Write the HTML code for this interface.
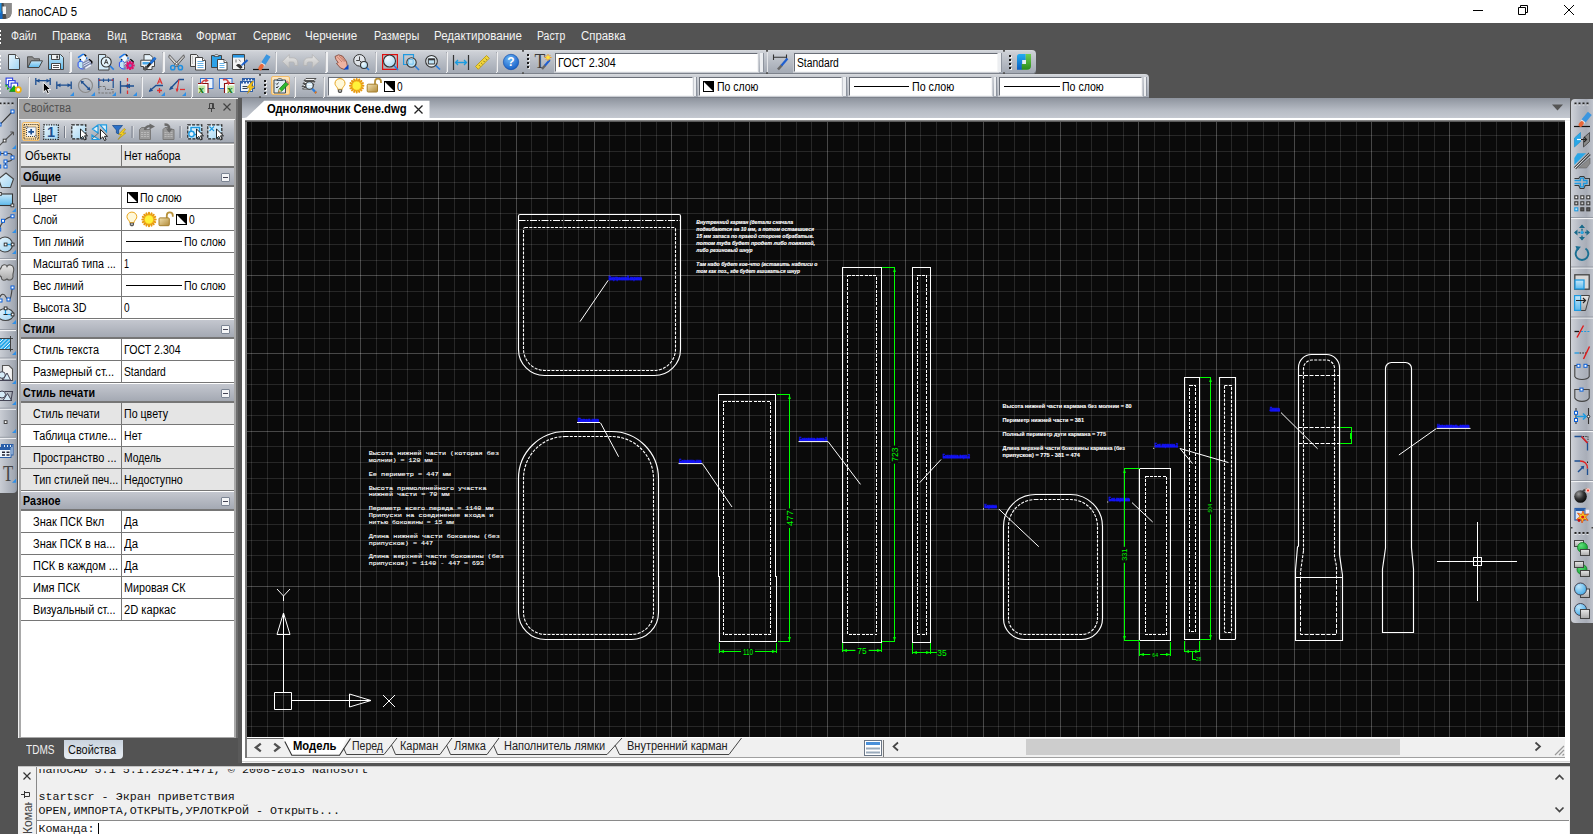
<!DOCTYPE html><html><head><meta charset="utf-8"><title>nanoCAD 5</title><style>
html,body{margin:0;padding:0;background:#535353;}
body{width:1593px;height:834px;position:relative;overflow:hidden;font-family:"Liberation Sans",sans-serif;font-size:12px;color:#000;}
.t{position:absolute;white-space:nowrap;line-height:14px;font-size:12px;}
.tb{position:absolute;background:linear-gradient(#d8dbdf 0%,#cdd0d6 8%,#b9bec6 45%,#a6acb6 88%,#a3a9b3 100%);box-shadow:0 -0.8px 0 #70767f inset;}
.cb{position:absolute;background:#fff;border:1px solid #f4f5f6;border-top-color:#6a6f78;border-left-color:#6a6f78;box-shadow:0 0 0 1px #c9ccd2;box-sizing:border-box;}
.sep{position:absolute;width:1.4px;background:#f0f1f3;box-shadow:-1px 0 0 rgba(60,66,80,0.28), -1px 1px 0 #f0f1f3;}
.grip{position:absolute;width:2px;}
.grip i{display:block;width:2px;height:2px;background:#1a1a1a;margin-bottom:2px;box-shadow:1px 1px 0 #f0f0f0;}
.sec{position:absolute;left:21px;width:213px;height:19px;background:linear-gradient(#c9ccd3,#a9aeb8);font-weight:bold;}
.sec .t{left:3px;top:3px;}
.row{position:absolute;left:21px;width:213px;height:21px;background:#fff;border-bottom:1px solid #7a7a7a;}
.row.g{background:#e6e6e6;}
.row .k{position:absolute;left:12px;top:4px;white-space:nowrap;line-height:14px;}
.row .v{position:absolute;left:102px;top:4px;white-space:nowrap;line-height:14px;}
.row .d{position:absolute;left:99px;top:0;width:1px;height:21px;background:#7a7a7a;}
.minus{position:absolute;width:7px;height:7px;border:1px solid #7c8594;background:#f4f5f7;border-radius:1px;}
.minus:after{content:"";position:absolute;left:1px;top:3px;width:5px;height:1px;background:#445;}
.sw{display:inline-block;width:10px;height:10px;border:1px solid #000;vertical-align:-2px;margin-right:3px;background:linear-gradient(to top right,#fff 0%,#fff 49%,#000 50%,#000 100%);}
.ln{display:inline-block;width:57px;height:1px;background:#000;vertical-align:4px;margin-right:3px;}
</style></head><body><div style="position:absolute;left:0px;top:0px;width:1593px;height:23px;background:#fff"></div><div class="t" style="left:17.5px;top:4.7px;font-size:12px;transform-origin:0 50%;transform:scaleX(0.9510);">nanoCAD 5</div><svg style="position:absolute;left:1460px;top:0" width="133" height="23" viewBox="1460 0 133 23"><path d="M1473 10.5h10 M1518.5 7.5h7v7h-7z M1520.5 7.5v-2h7v7h-2 M1564 5l10 10 M1574 5l-10 10" stroke="#000" stroke-width="1" fill="none"/></svg><div style="position:absolute;left:0px;top:23px;width:1593px;height:26px;background:#535353"></div><div class="t" style="left:11px;top:29px;font-size:12px;transform-origin:0 50%;transform:scaleX(0.8711);color:#f4f4f4;">Файл</div><div class="t" style="left:52.2px;top:29px;font-size:12px;transform-origin:0 50%;transform:scaleX(0.9547);color:#f4f4f4;">Правка</div><div class="t" style="left:106.5px;top:29px;font-size:12px;transform-origin:0 50%;transform:scaleX(0.8982);color:#f4f4f4;">Вид</div><div class="t" style="left:141px;top:29px;font-size:12px;transform-origin:0 50%;transform:scaleX(0.9147);color:#f4f4f4;">Вставка</div><div class="t" style="left:196.4px;top:29px;font-size:12px;transform-origin:0 50%;transform:scaleX(0.9524);color:#f4f4f4;">Формат</div><div class="t" style="left:252.6px;top:29px;font-size:12px;transform-origin:0 50%;transform:scaleX(0.9174);color:#f4f4f4;">Сервис</div><div class="t" style="left:305.3px;top:29px;font-size:12px;transform-origin:0 50%;transform:scaleX(0.9683);color:#f4f4f4;">Черчение</div><div class="t" style="left:373.6px;top:29px;font-size:12px;transform-origin:0 50%;transform:scaleX(0.9064);color:#f4f4f4;">Размеры</div><div class="t" style="left:434.4px;top:29px;font-size:12px;transform-origin:0 50%;transform:scaleX(0.9615);color:#f4f4f4;">Редактирование</div><div class="t" style="left:537.3px;top:29px;font-size:12px;transform-origin:0 50%;transform:scaleX(0.8690);color:#f4f4f4;">Растр</div><div class="t" style="left:581px;top:29px;font-size:12px;transform-origin:0 50%;transform:scaleX(0.9496);color:#f4f4f4;">Справка</div><div class="grip" style="left:0px;top:29.5px;width:1.3px;overflow:hidden"><i style="background:#fff;box-shadow:none;margin-bottom:2.1px"></i><i style="background:#fff;box-shadow:none;margin-bottom:2.1px"></i><i style="background:#fff;box-shadow:none;margin-bottom:2.1px"></i><i style="background:#fff;box-shadow:none;margin-bottom:2.1px"></i></div><div class="tb" style="left:0;top:49.5px;width:1004px;height:24px"></div><div class="tb" style="left:1003.5px;top:49.5px;width:32.5px;height:24px;border-radius:0 4px 4px 0"></div><div style="position:absolute;left:521.5999999999999px;top:49.5px;width:2.4px;height:2px;background:#555;border-radius:0 0 2px 2px"></div><div style="position:absolute;left:521.5999999999999px;top:71.5px;width:2.4px;height:2px;background:#555;border-radius:2px 2px 0 0"></div><div style="position:absolute;left:765.8px;top:49.5px;width:2.4px;height:2px;background:#555;border-radius:0 0 2px 2px"></div><div style="position:absolute;left:765.8px;top:71.5px;width:2.4px;height:2px;background:#555;border-radius:2px 2px 0 0"></div><div style="position:absolute;left:1002.5999999999999px;top:49.5px;width:2.4px;height:2px;background:#555;border-radius:0 0 2px 2px"></div><div style="position:absolute;left:1002.5999999999999px;top:71.5px;width:2.4px;height:2px;background:#555;border-radius:2px 2px 0 0"></div><div style="position:absolute;left:766.6px;top:51.5px;width:1.2px;height:20px;background:#e2e4e8"></div><div class="tb" style="left:0;top:74px;width:1149px;height:23.5px;border-radius:0 4px 0 0"></div><div class="sep" style="left:70.4px;top:52px;height:20px"></div><div class="sep" style="left:163.20000000000002px;top:52px;height:20px"></div><div class="sep" style="left:276.0px;top:52px;height:20px"></div><div class="sep" style="left:326.2px;top:52px;height:20px"></div><div class="sep" style="left:376.0px;top:52px;height:20px"></div><div class="sep" style="left:446.7px;top:52px;height:20px"></div><div class="sep" style="left:496.59999999999997px;top:52px;height:20px"></div><div class="grip" style="left:0px;top:55.2px;width:1.3px;overflow:hidden"><i style="background:#fff;box-shadow:none;margin-bottom:2.1px"></i><i style="background:#fff;box-shadow:none;margin-bottom:2.1px"></i><i style="background:#fff;box-shadow:none;margin-bottom:2.1px"></i><i style="background:#fff;box-shadow:none;margin-bottom:2.1px"></i></div><div class="grip" style="left:527.3px;top:54px"><i></i><i></i><i></i><i></i></div><div class="grip" style="left:1009px;top:54.5px"><i></i><i></i><i></i><i></i></div><div class="sep" style="left:28.9px;top:76.5px;height:20px"></div><div class="sep" style="left:141.70000000000002px;top:76.5px;height:20px"></div><div class="sep" style="left:191.5px;top:76.5px;height:20px"></div><div class="sep" style="left:294.7px;top:76.5px;height:20px"></div><div class="sep" style="left:323.79999999999995px;top:76.5px;height:20px"></div><div class="grip" style="left:0px;top:79.5px;width:1.3px;overflow:hidden"><i style="background:#fff;box-shadow:none;margin-bottom:2.1px"></i><i style="background:#fff;box-shadow:none;margin-bottom:2.1px"></i><i style="background:#fff;box-shadow:none;margin-bottom:2.1px"></i><i style="background:#fff;box-shadow:none;margin-bottom:2.1px"></i></div><div class="grip" style="left:264.3px;top:79.5px"><i></i><i></i><i></i><i></i></div><div style="position:absolute;left:258.8px;top:73.6px;width:2.4px;height:2px;background:#555;border-radius:0 0 2px 2px"></div><div style="position:absolute;left:258.8px;top:95.5px;width:2.4px;height:2px;background:#555;border-radius:2px 2px 0 0"></div><div style="position:absolute;left:271.2px;top:76.3px;width:18.6px;height:18.8px;background:linear-gradient(#fde9c6,#fbcf88 50%,#fde0aa);border:1px solid #f3bd6a;box-sizing:border-box;border-radius:2px"></div><div class="cb" style="left:555px;top:53px;width:203px;height:19px"></div><div class="t" style="left:557.8px;top:55.7px;font-size:12px;transform-origin:0 50%;transform:scaleX(0.9014);">ГОСТ 2.304</div><div class="cb" style="left:793.5px;top:53px;width:204px;height:19px"></div><div class="t" style="left:797.2px;top:55.7px;font-size:12px;transform-origin:0 50%;transform:scaleX(0.8582);">Standard</div><div class="cb" style="left:328px;top:77px;width:365px;height:19px"></div><div class="t" style="left:396.5px;top:79.7px;font-size:12px;transform-origin:0 50%;transform:scaleX(0.8391);">0</div><div class="cb" style="left:698.5px;top:77px;width:143px;height:19px"></div><svg style="position:absolute;left:703px;top:81px" width="11" height="11"><rect x="0.5" y="0.5" width="10" height="10" fill="#fff" stroke="#000"/><path d="M0.5 0.5H10.5V10.5Z" fill="#000"/></svg><div class="t" style="left:716.6px;top:79.7px;font-size:12px;transform-origin:0 50%;transform:scaleX(0.8726);">По слою</div><div class="cb" style="left:849px;top:77px;width:143px;height:19px"></div><div style="position:absolute;left:853.8px;top:86px;width:55.7px;height:1px;background:#000"></div><div class="t" style="left:912px;top:79.7px;font-size:12px;transform-origin:0 50%;transform:scaleX(0.8895);">По слою</div><div class="cb" style="left:999px;top:77px;width:143px;height:19px"></div><div style="position:absolute;left:1004px;top:86px;width:55.8px;height:1px;background:#000"></div><div class="t" style="left:1062.3px;top:79.7px;font-size:12px;transform-origin:0 50%;transform:scaleX(0.8810);">По слою</div><div style="position:absolute;left:760.4px;top:53px;width:2.4px;height:19px;background:#eceef1;box-shadow:1px 0 0 #8d939d"></div><div style="position:absolute;left:843.3px;top:77px;width:2.4px;height:19px;background:#eceef1;box-shadow:1px 0 0 #8d939d"></div><div style="position:absolute;left:993.6px;top:77px;width:2.4px;height:19px;background:#eceef1;box-shadow:1px 0 0 #8d939d"></div><div style="position:absolute;left:1144px;top:77px;width:2.4px;height:19px;background:#eceef1;box-shadow:1px 0 0 #8d939d"></div><div style="position:absolute;left:693.6px;top:77px;width:2.4px;height:19px;background:#eceef1;box-shadow:1px 0 0 #8d939d"></div><div style="position:absolute;left:998.3px;top:53px;width:2.4px;height:19px;background:#eceef1;box-shadow:1px 0 0 #8d939d"></div><div style="position:absolute;left:0;top:98px;width:17.2px;height:395px;background:linear-gradient(90deg,#c9cdd4,#b4b9c2 45%,#a2a8b2 85%,#8f959f);border-radius:0 0 4px 0"></div><div style="position:absolute;left:1570.7px;top:98.8px;width:22.3px;height:524px;background:linear-gradient(90deg,#cfd2d8,#b4b9c3 40%,#a9aeb8 70%,#bfc3cb);border-radius:4px 0 0 4px"></div><div style="position:absolute;left:18px;top:97.8px;width:219.5px;height:640px;background:#f2f2f2"></div><div style="position:absolute;left:19px;top:99px;width:218.5px;height:638.5px;background:#a9a9a9"></div><div style="position:absolute;left:19px;top:99px;width:218.5px;height:19.5px;background:#a0a0a0"></div><div style="position:absolute;left:19px;top:118.5px;width:216px;height:1.5px;background:#f4f4f4"></div><div style="position:absolute;left:235.5px;top:99px;width:2px;height:638.5px;background:#6e6e6e"></div><div class="t" style="left:22.5px;top:101px;font-size:12.5px;transform-origin:0 50%;transform:scaleX(0.8745);color:#505050;">Свойства</div><svg style="position:absolute;left:205px;top:100px" width="30" height="16" viewBox="205 100 30 16"><path d="M223.5 103.5l7 7 M230.5 103.5l-7 7" stroke="#444" stroke-width="1.2" fill="none"/><path d="M209.5 103.5v5 M213.5 103.5v5 M209.5 103.5h4 M212.5 103.5v5 M208 108.5h7 M211.5 108.5v3.5" stroke="#444" stroke-width="1" fill="none"/></svg><div class="tb" style="left:21px;top:120px;width:212.5px;height:23px"></div><div style="position:absolute;left:21.8px;top:122.2px;width:18.4px;height:18.6px;background:linear-gradient(#fde9c6,#fbcf88 50%,#fde0aa);border:1px solid #f3bd6a;box-sizing:border-box;border-radius:2px"></div><div style="position:absolute;left:21px;top:144px;width:212.5px;height:593px;background:#fff"></div><div style="position:absolute;left:21px;top:145px;width:212.5px;height:21px;background:#e5e5e5"></div><div style="position:absolute;left:21px;top:166px;width:212.5px;height:1px;background:#767676"></div><div style="position:absolute;left:121px;top:145px;width:1px;height:21px;background:#767676"></div><div class="t" style="left:24.5px;top:149px;font-size:12px;transform-origin:0 50%;transform:scaleX(0.9234);">Объекты</div><div class="t" style="left:124.4px;top:149px;font-size:12px;transform-origin:0 50%;transform:scaleX(0.8832);">Нет набора</div><div style="position:absolute;left:21px;top:166px;width:212.5px;height:1.5px;background:#767676"></div><div style="position:absolute;left:21px;top:167.5px;width:212.5px;height:17.5px;background:linear-gradient(#c4c7cf,#a4a9b3)"></div><div style="position:absolute;left:21px;top:185.0px;width:212.5px;height:1.5px;background:#767676"></div><div class="t" style="left:23.3px;top:170.0px;font-size:12px;transform-origin:0 50%;transform:scaleX(0.9262);font-weight:bold;">Общие</div><div class="minus" style="left:220.5px;top:172.5px"></div><div style="position:absolute;left:21px;top:187px;width:212.5px;height:21px;background:#fff"></div><div style="position:absolute;left:21px;top:208px;width:212.5px;height:1px;background:#767676"></div><div style="position:absolute;left:121px;top:187px;width:1px;height:21px;background:#767676"></div><div class="t" style="left:33.2px;top:191px;font-size:12px;transform-origin:0 50%;transform:scaleX(0.9000);">Цвет</div><svg style="position:absolute;left:127px;top:192.3px" width="11" height="11"><rect x="0.5" y="0.5" width="10" height="10" fill="#fff" stroke="#000"/><path d="M0.5 0.5H10.5V10.5Z" fill="#000"/></svg><div class="t" style="left:140.3px;top:191px;font-size:12px;transform-origin:0 50%;transform:scaleX(0.8789);">По слою</div><div style="position:absolute;left:21px;top:209px;width:212.5px;height:21px;background:#fff"></div><div style="position:absolute;left:21px;top:230px;width:212.5px;height:1px;background:#767676"></div><div style="position:absolute;left:121px;top:209px;width:1px;height:21px;background:#767676"></div><div class="t" style="left:33.2px;top:213px;font-size:12px;transform-origin:0 50%;transform:scaleX(0.8396);">Слой</div><span id="layerprops"></span><svg style="position:absolute;left:176px;top:214.3px" width="11" height="11"><rect x="0.5" y="0.5" width="10" height="10" fill="#fff" stroke="#000"/><path d="M0.5 0.5H10.5V10.5Z" fill="#000"/></svg><div class="t" style="left:189px;top:213px;font-size:12px;transform-origin:0 50%;transform:scaleX(0.8541);">0</div><div style="position:absolute;left:21px;top:231px;width:212.5px;height:21px;background:#fff"></div><div style="position:absolute;left:21px;top:252px;width:212.5px;height:1px;background:#767676"></div><div style="position:absolute;left:121px;top:231px;width:1px;height:21px;background:#767676"></div><div class="t" style="left:33.2px;top:235px;font-size:12px;transform-origin:0 50%;transform:scaleX(0.8953);">Тип линий</div><div style="position:absolute;left:126.2px;top:241px;width:55.5px;height:1px;background:#000"></div><div class="t" style="left:184.2px;top:235px;font-size:12px;transform-origin:0 50%;transform:scaleX(0.8789);">По слою</div><div style="position:absolute;left:21px;top:253px;width:212.5px;height:21px;background:#fff"></div><div style="position:absolute;left:21px;top:274px;width:212.5px;height:1px;background:#767676"></div><div style="position:absolute;left:121px;top:253px;width:1px;height:21px;background:#767676"></div><div class="t" style="left:33.2px;top:257px;font-size:12px;transform-origin:0 50%;transform:scaleX(0.8867);">Масштаб типа ...</div><div class="t" style="left:124.4px;top:257px;font-size:12px;transform-origin:0 50%;transform:scaleX(0.7492);">1</div><div style="position:absolute;left:21px;top:275px;width:212.5px;height:21px;background:#fff"></div><div style="position:absolute;left:21px;top:296px;width:212.5px;height:1px;background:#767676"></div><div style="position:absolute;left:121px;top:275px;width:1px;height:21px;background:#767676"></div><div class="t" style="left:33.2px;top:279px;font-size:12px;transform-origin:0 50%;transform:scaleX(0.8762);">Вес линий</div><div style="position:absolute;left:126.2px;top:285px;width:55.5px;height:1px;background:#000"></div><div class="t" style="left:184.2px;top:279px;font-size:12px;transform-origin:0 50%;transform:scaleX(0.8789);">По слою</div><div style="position:absolute;left:21px;top:297px;width:212.5px;height:21px;background:#fff"></div><div style="position:absolute;left:21px;top:318px;width:212.5px;height:1px;background:#767676"></div><div style="position:absolute;left:121px;top:297px;width:1px;height:21px;background:#767676"></div><div class="t" style="left:33.2px;top:301px;font-size:12px;transform-origin:0 50%;transform:scaleX(0.8917);">Высота 3D</div><div class="t" style="left:124.4px;top:301px;font-size:12px;transform-origin:0 50%;transform:scaleX(0.8391);">0</div><div style="position:absolute;left:21px;top:319.5px;width:212.5px;height:17.5px;background:linear-gradient(#c4c7cf,#a4a9b3)"></div><div style="position:absolute;left:21px;top:337.0px;width:212.5px;height:1.5px;background:#767676"></div><div class="t" style="left:23.3px;top:322.0px;font-size:12px;transform-origin:0 50%;transform:scaleX(0.8613);font-weight:bold;">Стили</div><div class="minus" style="left:220.5px;top:324.5px"></div><div style="position:absolute;left:21px;top:339px;width:212.5px;height:21px;background:#fff"></div><div style="position:absolute;left:21px;top:360px;width:212.5px;height:1px;background:#767676"></div><div style="position:absolute;left:121px;top:339px;width:1px;height:21px;background:#767676"></div><div class="t" style="left:33.2px;top:343px;font-size:12px;transform-origin:0 50%;transform:scaleX(0.9052);">Стиль текста</div><div class="t" style="left:124.4px;top:343px;font-size:12px;transform-origin:0 50%;transform:scaleX(0.8827);">ГОСТ 2.304</div><div style="position:absolute;left:21px;top:361px;width:212.5px;height:21px;background:#fff"></div><div style="position:absolute;left:21px;top:382px;width:212.5px;height:1px;background:#767676"></div><div style="position:absolute;left:121px;top:361px;width:1px;height:21px;background:#767676"></div><div class="t" style="left:33.2px;top:365px;font-size:12px;transform-origin:0 50%;transform:scaleX(0.9365);">Размерный ст...</div><div class="t" style="left:124.4px;top:365px;font-size:12px;transform-origin:0 50%;transform:scaleX(0.8582);">Standard</div><div style="position:absolute;left:21px;top:383.5px;width:212.5px;height:17.5px;background:linear-gradient(#c4c7cf,#a4a9b3)"></div><div style="position:absolute;left:21px;top:401.0px;width:212.5px;height:1.5px;background:#767676"></div><div class="t" style="left:23.3px;top:386.0px;font-size:12px;transform-origin:0 50%;transform:scaleX(0.8914);font-weight:bold;">Стиль печати</div><div class="minus" style="left:220.5px;top:388.5px"></div><div style="position:absolute;left:21px;top:403px;width:212.5px;height:21px;background:#e5e5e5"></div><div style="position:absolute;left:21px;top:424px;width:212.5px;height:1px;background:#767676"></div><div style="position:absolute;left:121px;top:403px;width:1px;height:21px;background:#767676"></div><div class="t" style="left:33.2px;top:407px;font-size:12px;transform-origin:0 50%;transform:scaleX(0.8896);">Стиль печати</div><div class="t" style="left:124.4px;top:407px;font-size:12px;transform-origin:0 50%;transform:scaleX(0.8862);">По цвету</div><div style="position:absolute;left:21px;top:425px;width:212.5px;height:21px;background:#fff"></div><div style="position:absolute;left:21px;top:446px;width:212.5px;height:1px;background:#767676"></div><div style="position:absolute;left:121px;top:425px;width:1px;height:21px;background:#767676"></div><div class="t" style="left:33.2px;top:429px;font-size:12px;transform-origin:0 50%;transform:scaleX(0.9050);">Таблица стиле...</div><div class="t" style="left:124.4px;top:429px;font-size:12px;transform-origin:0 50%;transform:scaleX(0.8807);">Нет</div><div style="position:absolute;left:21px;top:447px;width:212.5px;height:21px;background:#e5e5e5"></div><div style="position:absolute;left:21px;top:468px;width:212.5px;height:1px;background:#767676"></div><div style="position:absolute;left:121px;top:447px;width:1px;height:21px;background:#767676"></div><div class="t" style="left:33.2px;top:451px;font-size:12px;transform-origin:0 50%;transform:scaleX(0.9157);">Пространство ...</div><div class="t" style="left:124.4px;top:451px;font-size:12px;transform-origin:0 50%;transform:scaleX(0.8636);">Модель</div><div style="position:absolute;left:21px;top:469px;width:212.5px;height:21px;background:#e5e5e5"></div><div style="position:absolute;left:21px;top:490px;width:212.5px;height:1px;background:#767676"></div><div style="position:absolute;left:121px;top:469px;width:1px;height:21px;background:#767676"></div><div class="t" style="left:33.2px;top:473px;font-size:12px;transform-origin:0 50%;transform:scaleX(0.9037);">Тип стилей печ...</div><div class="t" style="left:124.4px;top:473px;font-size:12px;transform-origin:0 50%;transform:scaleX(0.8869);">Недоступно</div><div style="position:absolute;left:21px;top:491.5px;width:212.5px;height:17.5px;background:linear-gradient(#c4c7cf,#a4a9b3)"></div><div style="position:absolute;left:21px;top:509.0px;width:212.5px;height:1.5px;background:#767676"></div><div class="t" style="left:23.3px;top:494.0px;font-size:12px;transform-origin:0 50%;transform:scaleX(0.8953);font-weight:bold;">Разное</div><div class="minus" style="left:220.5px;top:496.5px"></div><div style="position:absolute;left:21px;top:511px;width:212.5px;height:21px;background:#fff"></div><div style="position:absolute;left:21px;top:532px;width:212.5px;height:1px;background:#767676"></div><div style="position:absolute;left:121px;top:511px;width:1px;height:21px;background:#767676"></div><div class="t" style="left:33.2px;top:515px;font-size:12px;transform-origin:0 50%;transform:scaleX(0.9243);">Знак ПСК Вкл</div><div class="t" style="left:124.4px;top:515px;font-size:12px;transform-origin:0 50%;transform:scaleX(0.9459);">Да</div><div style="position:absolute;left:21px;top:533px;width:212.5px;height:21px;background:#fff"></div><div style="position:absolute;left:21px;top:554px;width:212.5px;height:1px;background:#767676"></div><div style="position:absolute;left:121px;top:533px;width:1px;height:21px;background:#767676"></div><div class="t" style="left:33.2px;top:537px;font-size:12px;transform-origin:0 50%;transform:scaleX(0.9180);">Знак ПСК в на...</div><div class="t" style="left:124.4px;top:537px;font-size:12px;transform-origin:0 50%;transform:scaleX(0.9459);">Да</div><div style="position:absolute;left:21px;top:555px;width:212.5px;height:21px;background:#fff"></div><div style="position:absolute;left:21px;top:576px;width:212.5px;height:1px;background:#767676"></div><div style="position:absolute;left:121px;top:555px;width:1px;height:21px;background:#767676"></div><div class="t" style="left:33.2px;top:559px;font-size:12px;transform-origin:0 50%;transform:scaleX(0.9159);">ПСК в каждом ...</div><div class="t" style="left:124.4px;top:559px;font-size:12px;transform-origin:0 50%;transform:scaleX(0.9459);">Да</div><div style="position:absolute;left:21px;top:577px;width:212.5px;height:21px;background:#fff"></div><div style="position:absolute;left:21px;top:598px;width:212.5px;height:1px;background:#767676"></div><div style="position:absolute;left:121px;top:577px;width:1px;height:21px;background:#767676"></div><div class="t" style="left:33.2px;top:581px;font-size:12px;transform-origin:0 50%;transform:scaleX(0.9218);">Имя ПСК</div><div class="t" style="left:124.4px;top:581px;font-size:12px;transform-origin:0 50%;transform:scaleX(0.8985);">Мировая СК</div><div style="position:absolute;left:21px;top:599px;width:212.5px;height:21px;background:#fff"></div><div style="position:absolute;left:21px;top:620px;width:212.5px;height:1px;background:#767676"></div><div style="position:absolute;left:121px;top:599px;width:1px;height:21px;background:#767676"></div><div class="t" style="left:33.2px;top:603px;font-size:12px;transform-origin:0 50%;transform:scaleX(0.9023);">Визуальный ст...</div><div class="t" style="left:124.4px;top:603px;font-size:12px;transform-origin:0 50%;transform:scaleX(0.9296);">2D каркас</div><div class="t" style="left:26px;top:743px;font-size:12px;transform-origin:0 50%;transform:scaleX(0.8383);color:#f0f0f0;">TDMS</div><div style="position:absolute;left:64px;top:739.5px;width:59px;height:19.5px;background:linear-gradient(#c9d3de,#e9eef4);border-radius:0 0 4px 4px"></div><div class="t" style="left:68px;top:743px;font-size:12px;transform-origin:0 50%;transform:scaleX(0.9109);color:#111;">Свойства</div><div style="position:absolute;left:238px;top:98px;width:4px;height:665px;background:#5a5a5a"></div><div style="position:absolute;left:242px;top:98px;width:1328px;height:664.5px;background:#f0f0f0"></div><div style="position:absolute;left:242px;top:98px;width:1328px;height:20.5px;background:linear-gradient(#8e949e,#b7bcc5 60%,#c6cad2)"></div><svg style="position:absolute;left:242px;top:98px" width="200" height="21" viewBox="242 98 200 21"><path d="M244 119 V118 L246.5 117.6 L264.2 100.8 H429.5 V119 Z" fill="#fff"/></svg><div class="t" style="left:266.9px;top:102.4px;font-size:12px;transform-origin:0 50%;transform:scaleX(0.9373);font-weight:bold;">Однолямочник Сене.dwg</div><svg style="position:absolute;left:413px;top:104px" width="12" height="12"><path d="M1.5 1.5l8 8 M9.5 1.5l-8 8" stroke="#222" stroke-width="1.3" fill="none"/></svg><svg style="position:absolute;left:1552px;top:104px" width="12" height="8"><path d="M0 0.5h11l-5.5 6z" fill="#555"/></svg><div style="position:absolute;left:242px;top:118px;width:1328px;height:1.5px;background:#fff"></div><div style="position:absolute;left:245.3px;top:119.5px;width:1319.5px;height:618px;background:#6e6e6e"></div><div style="position:absolute;left:242px;top:119.5px;width:3px;height:643px;background:#fff"></div><div style="position:absolute;left:245.3px;top:119.5px;width:1.7px;height:638px;background:#7a7a7a"></div><div style="position:absolute;left:245.3px;top:119.5px;width:1319.5px;height:2.5px;background:linear-gradient(#9a9a9a,#444)"></div><div style="position:absolute;left:1565px;top:121px;width:4.5px;height:640px;background:#fff"></div><div style="position:absolute;left:247px;top:737px;width:1318px;height:20.5px;background:#f0f0f0"></div><div style="position:absolute;left:247px;top:736.7px;width:1318px;height:1.2px;background:#fff"></div><div style="position:absolute;left:247px;top:738px;width:38px;height:0.9px;background:#6a6a6a"></div><div style="position:absolute;left:247px;top:756.8px;width:1318px;height:0.9px;background:#a0a0a0"></div><div style="position:absolute;left:242px;top:757.5px;width:1328px;height:4.3px;background:linear-gradient(#fff,#fff 75%,#aaa)"></div><svg style="position:absolute;left:247px;top:737px" width="1318" height="22" viewBox="247 737 1318 22"><path d="M260.8 743.6l-5 3.9 5 3.9 M274.2 743.6l5 3.9-5 3.9" stroke="#505050" stroke-width="2.3" fill="none"/><path d="M283 737.5 L292 755 H339.5 L347 737.5 Z" fill="#fff"/><path d="M284.8 741.5 L291.8 755.2 H339.5 L350.5 738.5" stroke="#333" stroke-width="1.1" fill="none"/><path d="M343.5 748 L346.5 754.5 H384 L397 738 M391.5 745 L395.5 754.5 H440 L452 738 M446.5 745 L450.5 754.5 H487 L499 738 M493.5 745 L497.5 754.5 H607 L622 738 M615 745 L619.5 754.5 H729 L741.5 738" stroke="#444" stroke-width="1" fill="none"/><rect x="864.5" y="740.5" width="17" height="15" fill="#fff" stroke="#6a7686"/><rect x="866" y="742" width="14" height="3" fill="#4a90d9"/><path d="M866 748.5h14 M866 752.5h14" stroke="#9ab" stroke-width="2"/><path d="M883.5 740v17" stroke="#777"/><path d="M898 742.5l-4.5 4 4.5 4 M1535.5 742.5l4.5 4-4.5 4" stroke="#444" stroke-width="1.7" fill="none"/><rect x="1026" y="739" width="374" height="16" fill="#cdcdcd"/><path d="M1564 746l-9 9 M1564 750l-5 5 M1564 754l-1.5 1.5" stroke="#999" stroke-width="1.2"/></svg><div class="t" style="left:293.4px;top:738.6px;font-size:12px;transform-origin:0 50%;transform:scaleX(0.9363);font-weight:bold;">Модель</div><div class="t" style="left:352.1px;top:738.6px;font-size:12px;transform-origin:0 50%;transform:scaleX(0.8761);color:#222;">Перед</div><div class="t" style="left:400.3px;top:738.6px;font-size:12px;transform-origin:0 50%;transform:scaleX(0.9119);color:#222;">Карман</div><div class="t" style="left:453.7px;top:738.6px;font-size:12px;transform-origin:0 50%;transform:scaleX(0.9193);color:#222;">Лямка</div><div class="t" style="left:503.8px;top:738.6px;font-size:12px;transform-origin:0 50%;transform:scaleX(0.9158);color:#222;">Наполнитель лямки</div><div class="t" style="left:626.9px;top:738.6px;font-size:12px;transform-origin:0 50%;transform:scaleX(0.9164);color:#222;">Внутренний карман</div><svg id="cv" style="position:absolute;left:247px;top:122px" width="1318" height="615" viewBox="247 122 1318 615">
<rect x="247" y="122" width="1318" height="615" fill="#0a0a0a"/>
<g shape-rendering="crispEdges"><rect x="251" y="122" width="1" height="615" fill="#fff" opacity="0.12"/>
<rect x="267" y="122" width="1" height="615" fill="#fff" opacity="0.12"/>
<rect x="283" y="122" width="1" height="615" fill="#fff" opacity="0.25"/>
<rect x="298" y="122" width="1" height="615" fill="#fff" opacity="0.12"/>
<rect x="314" y="122" width="1" height="615" fill="#fff" opacity="0.12"/>
<rect x="329" y="122" width="1" height="615" fill="#fff" opacity="0.12"/>
<rect x="345" y="122" width="1" height="615" fill="#fff" opacity="0.12"/>
<rect x="360" y="122" width="1" height="615" fill="#fff" opacity="0.25"/>
<rect x="376" y="122" width="1" height="615" fill="#fff" opacity="0.12"/>
<rect x="391" y="122" width="1" height="615" fill="#fff" opacity="0.12"/>
<rect x="407" y="122" width="1" height="615" fill="#fff" opacity="0.12"/>
<rect x="423" y="122" width="1" height="615" fill="#fff" opacity="0.12"/>
<rect x="438" y="122" width="1" height="615" fill="#fff" opacity="0.25"/>
<rect x="454" y="122" width="1" height="615" fill="#fff" opacity="0.12"/>
<rect x="469" y="122" width="1" height="615" fill="#fff" opacity="0.12"/>
<rect x="485" y="122" width="1" height="615" fill="#fff" opacity="0.12"/>
<rect x="500" y="122" width="1" height="615" fill="#fff" opacity="0.12"/>
<rect x="516" y="122" width="1" height="615" fill="#fff" opacity="0.25"/>
<rect x="531" y="122" width="1" height="615" fill="#fff" opacity="0.12"/>
<rect x="547" y="122" width="1" height="615" fill="#fff" opacity="0.12"/>
<rect x="563" y="122" width="1" height="615" fill="#fff" opacity="0.12"/>
<rect x="578" y="122" width="1" height="615" fill="#fff" opacity="0.12"/>
<rect x="594" y="122" width="1" height="615" fill="#fff" opacity="0.25"/>
<rect x="609" y="122" width="1" height="615" fill="#fff" opacity="0.12"/>
<rect x="625" y="122" width="1" height="615" fill="#fff" opacity="0.12"/>
<rect x="640" y="122" width="1" height="615" fill="#fff" opacity="0.12"/>
<rect x="656" y="122" width="1" height="615" fill="#fff" opacity="0.12"/>
<rect x="671" y="122" width="1" height="615" fill="#fff" opacity="0.25"/>
<rect x="687" y="122" width="1" height="615" fill="#fff" opacity="0.12"/>
<rect x="703" y="122" width="1" height="615" fill="#fff" opacity="0.12"/>
<rect x="718" y="122" width="1" height="615" fill="#fff" opacity="0.12"/>
<rect x="734" y="122" width="1" height="615" fill="#fff" opacity="0.12"/>
<rect x="749" y="122" width="1" height="615" fill="#fff" opacity="0.25"/>
<rect x="765" y="122" width="1" height="615" fill="#fff" opacity="0.12"/>
<rect x="780" y="122" width="1" height="615" fill="#fff" opacity="0.12"/>
<rect x="796" y="122" width="1" height="615" fill="#fff" opacity="0.12"/>
<rect x="811" y="122" width="1" height="615" fill="#fff" opacity="0.12"/>
<rect x="827" y="122" width="1" height="615" fill="#fff" opacity="0.25"/>
<rect x="843" y="122" width="1" height="615" fill="#fff" opacity="0.12"/>
<rect x="858" y="122" width="1" height="615" fill="#fff" opacity="0.12"/>
<rect x="874" y="122" width="1" height="615" fill="#fff" opacity="0.12"/>
<rect x="889" y="122" width="1" height="615" fill="#fff" opacity="0.12"/>
<rect x="905" y="122" width="1" height="615" fill="#fff" opacity="0.25"/>
<rect x="920" y="122" width="1" height="615" fill="#fff" opacity="0.12"/>
<rect x="936" y="122" width="1" height="615" fill="#fff" opacity="0.12"/>
<rect x="951" y="122" width="1" height="615" fill="#fff" opacity="0.12"/>
<rect x="967" y="122" width="1" height="615" fill="#fff" opacity="0.12"/>
<rect x="983" y="122" width="1" height="615" fill="#fff" opacity="0.25"/>
<rect x="998" y="122" width="1" height="615" fill="#fff" opacity="0.12"/>
<rect x="1014" y="122" width="1" height="615" fill="#fff" opacity="0.12"/>
<rect x="1029" y="122" width="1" height="615" fill="#fff" opacity="0.12"/>
<rect x="1045" y="122" width="1" height="615" fill="#fff" opacity="0.12"/>
<rect x="1060" y="122" width="1" height="615" fill="#fff" opacity="0.25"/>
<rect x="1076" y="122" width="1" height="615" fill="#fff" opacity="0.12"/>
<rect x="1091" y="122" width="1" height="615" fill="#fff" opacity="0.12"/>
<rect x="1107" y="122" width="1" height="615" fill="#fff" opacity="0.12"/>
<rect x="1123" y="122" width="1" height="615" fill="#fff" opacity="0.12"/>
<rect x="1138" y="122" width="1" height="615" fill="#fff" opacity="0.25"/>
<rect x="1154" y="122" width="1" height="615" fill="#fff" opacity="0.12"/>
<rect x="1169" y="122" width="1" height="615" fill="#fff" opacity="0.12"/>
<rect x="1185" y="122" width="1" height="615" fill="#fff" opacity="0.12"/>
<rect x="1200" y="122" width="1" height="615" fill="#fff" opacity="0.12"/>
<rect x="1216" y="122" width="1" height="615" fill="#fff" opacity="0.25"/>
<rect x="1231" y="122" width="1" height="615" fill="#fff" opacity="0.12"/>
<rect x="1247" y="122" width="1" height="615" fill="#fff" opacity="0.12"/>
<rect x="1263" y="122" width="1" height="615" fill="#fff" opacity="0.12"/>
<rect x="1278" y="122" width="1" height="615" fill="#fff" opacity="0.12"/>
<rect x="1294" y="122" width="1" height="615" fill="#fff" opacity="0.25"/>
<rect x="1309" y="122" width="1" height="615" fill="#fff" opacity="0.12"/>
<rect x="1325" y="122" width="1" height="615" fill="#fff" opacity="0.12"/>
<rect x="1340" y="122" width="1" height="615" fill="#fff" opacity="0.12"/>
<rect x="1356" y="122" width="1" height="615" fill="#fff" opacity="0.12"/>
<rect x="1371" y="122" width="1" height="615" fill="#fff" opacity="0.25"/>
<rect x="1387" y="122" width="1" height="615" fill="#fff" opacity="0.12"/>
<rect x="1403" y="122" width="1" height="615" fill="#fff" opacity="0.12"/>
<rect x="1418" y="122" width="1" height="615" fill="#fff" opacity="0.12"/>
<rect x="1434" y="122" width="1" height="615" fill="#fff" opacity="0.12"/>
<rect x="1449" y="122" width="1" height="615" fill="#fff" opacity="0.25"/>
<rect x="1465" y="122" width="1" height="615" fill="#fff" opacity="0.12"/>
<rect x="1480" y="122" width="1" height="615" fill="#fff" opacity="0.12"/>
<rect x="1496" y="122" width="1" height="615" fill="#fff" opacity="0.12"/>
<rect x="1511" y="122" width="1" height="615" fill="#fff" opacity="0.12"/>
<rect x="1527" y="122" width="1" height="615" fill="#fff" opacity="0.25"/>
<rect x="1543" y="122" width="1" height="615" fill="#fff" opacity="0.12"/>
<rect x="1558" y="122" width="1" height="615" fill="#fff" opacity="0.12"/>
<rect x="247" y="135" width="1318" height="1" fill="#fff" opacity="0.12"/>
<rect x="247" y="151" width="1318" height="1" fill="#fff" opacity="0.12"/>
<rect x="247" y="166" width="1318" height="1" fill="#fff" opacity="0.12"/>
<rect x="247" y="182" width="1318" height="1" fill="#fff" opacity="0.12"/>
<rect x="247" y="198" width="1318" height="1" fill="#fff" opacity="0.25"/>
<rect x="247" y="213" width="1318" height="1" fill="#fff" opacity="0.12"/>
<rect x="247" y="229" width="1318" height="1" fill="#fff" opacity="0.12"/>
<rect x="247" y="244" width="1318" height="1" fill="#fff" opacity="0.12"/>
<rect x="247" y="260" width="1318" height="1" fill="#fff" opacity="0.12"/>
<rect x="247" y="275" width="1318" height="1" fill="#fff" opacity="0.25"/>
<rect x="247" y="291" width="1318" height="1" fill="#fff" opacity="0.12"/>
<rect x="247" y="306" width="1318" height="1" fill="#fff" opacity="0.12"/>
<rect x="247" y="322" width="1318" height="1" fill="#fff" opacity="0.12"/>
<rect x="247" y="338" width="1318" height="1" fill="#fff" opacity="0.12"/>
<rect x="247" y="353" width="1318" height="1" fill="#fff" opacity="0.25"/>
<rect x="247" y="369" width="1318" height="1" fill="#fff" opacity="0.12"/>
<rect x="247" y="384" width="1318" height="1" fill="#fff" opacity="0.12"/>
<rect x="247" y="400" width="1318" height="1" fill="#fff" opacity="0.12"/>
<rect x="247" y="415" width="1318" height="1" fill="#fff" opacity="0.12"/>
<rect x="247" y="431" width="1318" height="1" fill="#fff" opacity="0.25"/>
<rect x="247" y="446" width="1318" height="1" fill="#fff" opacity="0.12"/>
<rect x="247" y="462" width="1318" height="1" fill="#fff" opacity="0.12"/>
<rect x="247" y="478" width="1318" height="1" fill="#fff" opacity="0.12"/>
<rect x="247" y="493" width="1318" height="1" fill="#fff" opacity="0.12"/>
<rect x="247" y="509" width="1318" height="1" fill="#fff" opacity="0.25"/>
<rect x="247" y="524" width="1318" height="1" fill="#fff" opacity="0.12"/>
<rect x="247" y="540" width="1318" height="1" fill="#fff" opacity="0.12"/>
<rect x="247" y="555" width="1318" height="1" fill="#fff" opacity="0.12"/>
<rect x="247" y="571" width="1318" height="1" fill="#fff" opacity="0.12"/>
<rect x="247" y="586" width="1318" height="1" fill="#fff" opacity="0.25"/>
<rect x="247" y="602" width="1318" height="1" fill="#fff" opacity="0.12"/>
<rect x="247" y="618" width="1318" height="1" fill="#fff" opacity="0.12"/>
<rect x="247" y="633" width="1318" height="1" fill="#fff" opacity="0.12"/>
<rect x="247" y="649" width="1318" height="1" fill="#fff" opacity="0.12"/>
<rect x="247" y="664" width="1318" height="1" fill="#fff" opacity="0.25"/>
<rect x="247" y="680" width="1318" height="1" fill="#fff" opacity="0.12"/>
<rect x="247" y="695" width="1318" height="1" fill="#fff" opacity="0.12"/>
<rect x="247" y="711" width="1318" height="1" fill="#fff" opacity="0.12"/>
<rect x="247" y="726" width="1318" height="1" fill="#fff" opacity="0.12"/></g>
<path d="M520.0 214.5 H679.0 A1.5 1.5 0 0 1 680.5 216.0 V349.5 A26.0 26.0 0 0 1 654.5 375.5 H544.5 A26.0 26.0 0 0 1 518.5 349.5 V216.0 A1.5 1.5 0 0 1 520.0 214.5 Z" stroke="#fff" stroke-width="1.15" fill="none"/>
<line x1="518.5" y1="220.5" x2="680.5" y2="220.5" stroke="#fff" stroke-width="1" stroke-dasharray="7 1.5 1.5 1.5"/>
<path d="M525.0 227.5 H674.0 A1.5 1.5 0 0 1 675.5 229.0 V349.0 A21.5 21.5 0 0 1 654.0 370.5 H545.0 A21.5 21.5 0 0 1 523.5 349.0 V229.0 A1.5 1.5 0 0 1 525.0 227.5 Z" stroke="#fff" stroke-width="1.1" fill="none" stroke-dasharray="3 1.3"/>
<rect x="609.0" y="278.1" width="33.1" height="2.2" fill="#1414ff" opacity="0.8"/>
<text x="609.0" y="280.1" textLength="33.1" lengthAdjust="spacingAndGlyphs" font-family="Liberation Sans" font-weight="bold" font-size="5.2" fill="#1414ff" stroke="#1414ff" stroke-width="0.35">Внутренний карман</text>
<line x1="608.2" y1="280.3" x2="580.0" y2="321.6" stroke="#fff" stroke-width="1"/>
<path d="M565.5 431.5 H611.5 A47.0 47.0 0 0 1 658.5 478.5 V612.5 A27.0 27.0 0 0 1 631.5 639.5 H545.5 A27.0 27.0 0 0 1 518.5 612.5 V478.5 A47.0 47.0 0 0 1 565.5 431.5 Z" stroke="#fff" stroke-width="1.15" fill="none"/>
<path d="M565.5 436.5 H611.5 A42.0 42.0 0 0 1 653.5 478.5 V612.5 A22.0 22.0 0 0 1 631.5 634.5 H545.5 A22.0 22.0 0 0 1 523.5 612.5 V478.5 A42.0 42.0 0 0 1 565.5 436.5 Z" stroke="#fff" stroke-width="1.1" fill="none" stroke-dasharray="3 1.3"/>
<rect x="578.0" y="419.7" width="21.0" height="2.2" fill="#1414ff" opacity="0.8"/>
<text x="578.0" y="421.7" textLength="21.0" lengthAdjust="spacingAndGlyphs" font-family="Liberation Sans" font-weight="bold" font-size="5.2" fill="#1414ff" stroke="#1414ff" stroke-width="0.35">Перед низ</text>
<line x1="577.0" y1="422.5" x2="600.0" y2="422.5" stroke="#fff" stroke-width="1"/>
<line x1="600.5" y1="422.8" x2="618.6" y2="456.7" stroke="#fff" stroke-width="1"/>
<path d="M718.5 394.5 H775.5 V576.5 H776.5 V641.5 H719.5 V576.5 H718.5 Z" stroke="#fff" stroke-width="1.15" fill="none" shape-rendering="crispEdges"/>
<path d="M723.5 401.5 H770.5 V634.5 H723.5 Z" stroke="#fff" stroke-width="1.1" fill="none" stroke-dasharray="3 1.3" shape-rendering="crispEdges"/>
<rect x="679.5" y="460.8" width="22.0" height="2.2" fill="#1414ff" opacity="0.8"/>
<text x="679.5" y="462.8" textLength="22.0" lengthAdjust="spacingAndGlyphs" font-family="Liberation Sans" font-weight="bold" font-size="5.2" fill="#1414ff" stroke="#1414ff" stroke-width="0.35">Боковина низ</text>
<line x1="678.5" y1="463.6" x2="702.5" y2="463.6" stroke="#fff" stroke-width="1"/>
<line x1="702.5" y1="463.8" x2="732.0" y2="507.0" stroke="#fff" stroke-width="1"/>
<path d="M776.5 394.5 H789.5 V641.5 H777.5" stroke="#00ff00" stroke-width="1" fill="none" shape-rendering="crispEdges"/>
<path d="M789.5 394.5 L788.1 399.0 L790.9 399.0 Z" fill="#00ff00"/>
<path d="M789.5 641.5 L790.9 637.0 L788.1 637.0 Z" fill="#00ff00"/>
<path d="M719.5 643.0 V653.0 M776.5 643.0 V653.0 M719.5 651.5 H776.5" stroke="#00ff00" stroke-width="1" fill="none" shape-rendering="crispEdges"/>
<path d="M719.5 651.5 L724.0 652.9 L724.0 650.1 Z" fill="#00ff00"/>
<path d="M776.5 651.5 L772.0 650.1 L772.0 652.9 Z" fill="#00ff00"/>
<rect x="786.0" y="508.4" width="6.9" height="19.6" fill="#0a0a0a"/>
<text transform="translate(789.5 518.2) rotate(-90)" x="-7.8" y="3.0" textLength="15.6" lengthAdjust="spacingAndGlyphs" font-family="Liberation Sans" font-size="8.24" fill="#00ff00">477</text>
<rect x="741.0" y="648.4" width="14.0" height="6.9" fill="#0a0a0a"/>
<text transform="translate(748.0 651.9)" x="-5.0" y="3.0" textLength="10.0" lengthAdjust="spacingAndGlyphs" font-family="Liberation Sans" font-size="8.24" fill="#00ff00">110</text>
<path d="M842.5 267.5 H881.5 V642.5 H842.5 Z" stroke="#fff" stroke-width="1.15" fill="none" shape-rendering="crispEdges"/>
<path d="M847.5 275.5 H876.5 V634.5 H847.5 Z" stroke="#fff" stroke-width="1.1" fill="none" stroke-dasharray="3 1.3" shape-rendering="crispEdges"/>
<rect x="799.5" y="438.8" width="27.8" height="2.2" fill="#1414ff" opacity="0.8"/>
<text x="799.5" y="440.8" textLength="27.8" lengthAdjust="spacingAndGlyphs" font-family="Liberation Sans" font-weight="bold" font-size="5.2" fill="#1414ff" stroke="#1414ff" stroke-width="0.35">Боковина верх 1</text>
<line x1="798.5" y1="441.6" x2="828.3" y2="441.6" stroke="#fff" stroke-width="1"/>
<line x1="828.3" y1="441.8" x2="860.5" y2="484.4" stroke="#fff" stroke-width="1"/>
<path d="M881.5 267.5 H894.5 V641.5 H881.5" stroke="#00ff00" stroke-width="1" fill="none" shape-rendering="crispEdges"/>
<path d="M894.5 267.5 L893.1 272.0 L895.9 272.0 Z" fill="#00ff00"/>
<path d="M894.5 641.5 L895.9 637.0 L893.1 637.0 Z" fill="#00ff00"/>
<path d="M842.5 643.0 V652.0 M881.5 643.0 V652.0 M842.5 650.5 H881.5" stroke="#00ff00" stroke-width="1" fill="none" shape-rendering="crispEdges"/>
<path d="M842.5 650.5 L847.0 651.9 L847.0 649.1 Z" fill="#00ff00"/>
<path d="M881.5 650.5 L877.0 649.1 L877.0 651.9 Z" fill="#00ff00"/>
<rect x="891.0" y="445.5" width="6.9" height="18.2" fill="#0a0a0a"/>
<text transform="translate(894.5 454.6) rotate(-90)" x="-7.1" y="3.0" textLength="14.2" lengthAdjust="spacingAndGlyphs" font-family="Liberation Sans" font-size="8.24" fill="#00ff00">723</text>
<rect x="855.4" y="647.1" width="13.3" height="6.9" fill="#0a0a0a"/>
<text transform="translate(862.0 650.6)" x="-4.7" y="3.0" textLength="9.3" lengthAdjust="spacingAndGlyphs" font-family="Liberation Sans" font-size="8.24" fill="#00ff00">75</text>
<path d="M912.5 267.5 H930.5 V642.5 H912.5 Z" stroke="#fff" stroke-width="1.15" fill="none" shape-rendering="crispEdges"/>
<path d="M917.5 275.5 H926.5 V634.5 H917.5 Z" stroke="#fff" stroke-width="1.1" fill="none" stroke-dasharray="3 1.3" shape-rendering="crispEdges"/>
<rect x="943.0" y="456.3" width="27.0" height="2.2" fill="#1414ff" opacity="0.8"/>
<text x="943.0" y="458.3" textLength="27.0" lengthAdjust="spacingAndGlyphs" font-family="Liberation Sans" font-weight="bold" font-size="5.2" fill="#1414ff" stroke="#1414ff" stroke-width="0.35">Боковина верх 2</text>
<line x1="941.0" y1="459.5" x2="919.7" y2="482.7" stroke="#fff" stroke-width="1"/>
<path d="M912.5 643.0 V653.5 M930.5 643.0 V653.5 M912.5 652.5 H930.5" stroke="#00ff00" stroke-width="1" fill="none" shape-rendering="crispEdges"/>
<path d="M912.5 652.5 L917.0 653.9 L917.0 651.1 Z" fill="#00ff00"/>
<path d="M930.5 652.5 L926.0 651.1 L926.0 653.9 Z" fill="#00ff00"/>
<path d="M930.5 652.5 H936.5" stroke="#00ff00" stroke-width="1" fill="none" shape-rendering="crispEdges"/>
<text transform="translate(942.0 653.0)" x="-4.7" y="3.0" textLength="9.3" lengthAdjust="spacingAndGlyphs" font-family="Liberation Sans" font-size="8.24" fill="#00ff00">35</text>
<path d="M1035.5 494.5 H1070.5 A32.0 32.0 0 0 1 1102.5 526.5 V618.5 A21.0 21.0 0 0 1 1081.5 639.5 H1024.5 A21.0 21.0 0 0 1 1003.5 618.5 V526.5 A32.0 32.0 0 0 1 1035.5 494.5 Z" stroke="#fff" stroke-width="1.15" fill="none"/>
<path d="M1035.5 499.5 H1070.5 A27.0 27.0 0 0 1 1097.5 526.5 V618.5 A16.0 16.0 0 0 1 1081.5 634.5 H1024.5 A16.0 16.0 0 0 1 1008.5 618.5 V526.5 A27.0 27.0 0 0 1 1035.5 499.5 Z" stroke="#fff" stroke-width="1.1" fill="none" stroke-dasharray="3 1.3"/>
<rect x="984.8" y="506.0" width="12.3" height="2.2" fill="#1414ff" opacity="0.8"/>
<text x="984.8" y="508.0" textLength="12.3" lengthAdjust="spacingAndGlyphs" font-family="Liberation Sans" font-weight="bold" font-size="5.2" fill="#1414ff" stroke="#1414ff" stroke-width="0.35">Карман</text>
<rect x="983.0" y="508.4" width="1" height="1" fill="#fff"/>
<line x1="999.0" y1="509.2" x2="1038.8" y2="546.7" stroke="#fff" stroke-width="1"/>
<path d="M1139.5 468.5 H1170.5 V640.5 H1139.5 Z" stroke="#fff" stroke-width="1.15" fill="none" shape-rendering="crispEdges"/>
<path d="M1145.5 476.5 H1166.5 V634.5 H1145.5 Z" stroke="#fff" stroke-width="1.1" fill="none" stroke-dasharray="3 1.3" shape-rendering="crispEdges"/>
<rect x="1109.0" y="499.1" width="21.0" height="2.2" fill="#1414ff" opacity="0.8"/>
<text x="1109.0" y="501.1" textLength="21.0" lengthAdjust="spacingAndGlyphs" font-family="Liberation Sans" font-weight="bold" font-size="5.2" fill="#1414ff" stroke="#1414ff" stroke-width="0.35">Бок кармана</text>
<rect x="1107.2" y="501.5" width="1" height="1" fill="#fff"/>
<line x1="1132.0" y1="502.6" x2="1152.7" y2="522.0" stroke="#fff" stroke-width="1"/>
<path d="M1139.5 468.5 H1124.5 V640.5 H1139.5" stroke="#00ff00" stroke-width="1" fill="none" shape-rendering="crispEdges"/>
<path d="M1124.5 468.5 L1123.1 473.0 L1125.9 473.0 Z" fill="#00ff00"/>
<path d="M1124.5 640.5 L1125.9 636.0 L1123.1 636.0 Z" fill="#00ff00"/>
<path d="M1139.5 642.0 V656.0 M1170.5 642.0 V656.0 M1139.5 654.5 H1170.5" stroke="#00ff00" stroke-width="1" fill="none" shape-rendering="crispEdges"/>
<path d="M1139.5 654.5 L1144.0 655.9 L1144.0 653.1 Z" fill="#00ff00"/>
<path d="M1170.5 654.5 L1166.0 653.1 L1166.0 655.9 Z" fill="#00ff00"/>
<rect x="1121.5" y="546.8" width="6.0" height="16.0" fill="#0a0a0a"/>
<text transform="translate(1124.5 554.8) rotate(-90)" x="-6.0" y="2.5" textLength="12.0" lengthAdjust="spacingAndGlyphs" font-family="Liberation Sans" font-size="6.98" fill="#00ff00">331</text>
<rect x="1150.3" y="652.7" width="9.8" height="4.6" fill="#0a0a0a"/>
<text transform="translate(1155.2 655.0)" x="-2.9" y="1.8" textLength="5.8" lengthAdjust="spacingAndGlyphs" font-family="Liberation Sans" font-size="5.03" fill="#00ff00">64</text>
<path d="M1184.5 377.5 H1199.5 V639.5 H1184.5 Z" stroke="#fff" stroke-width="1.15" fill="none" shape-rendering="crispEdges"/>
<path d="M1189.5 385.5 H1195.5 V631.5 H1189.5 Z" stroke="#fff" stroke-width="1.1" fill="none" stroke-dasharray="3 1.3" shape-rendering="crispEdges"/>
<path d="M1199.5 377.5 H1210.5 V639.5 H1199.5" stroke="#00ff00" stroke-width="1" fill="none" shape-rendering="crispEdges"/>
<path d="M1210.5 377.5 L1209.1 382.0 L1211.9 382.0 Z" fill="#00ff00"/>
<path d="M1210.5 639.5 L1211.9 635.0 L1209.1 635.0 Z" fill="#00ff00"/>
<rect x="1208.2" y="501.9" width="4.6" height="12.6" fill="#0a0a0a"/>
<text transform="translate(1210.5 508.2) rotate(-90)" x="-4.3" y="1.8" textLength="8.6" lengthAdjust="spacingAndGlyphs" font-family="Liberation Sans" font-size="5.03" fill="#00ff00">504</text>
<path d="M1184.5 641.0 V652.0 M1199.5 641.0 V652.0 M1184.5 651.5 H1199.5" stroke="#00ff00" stroke-width="1" fill="none" shape-rendering="crispEdges"/>
<path d="M1184.5 651.5 L1189.0 652.9 L1189.0 650.1 Z" fill="#00ff00"/>
<path d="M1199.5 651.5 L1195.0 650.1 L1195.0 652.9 Z" fill="#00ff00"/>
<path d="M1192.5 651.5 V659.5 H1196" stroke="#00ff00" stroke-width="1" fill="none" shape-rendering="crispEdges"/>
<text transform="translate(1198.6 659.0)" x="-2.5" y="1.8" textLength="5.0" lengthAdjust="spacingAndGlyphs" font-family="Liberation Sans" font-size="5.03" fill="#00ff00">28</text>
<path d="M1219.5 377.5 H1235.5 V638.5 A1.0 1.0 0 0 1 1234.5 639.5 H1220.5 A1.0 1.0 0 0 1 1219.5 638.5 V377.5 Z" stroke="#fff" stroke-width="1.15" fill="none"/>
<path d="M1224.5 385.5 H1231.5 V631.0 A1.5 1.5 0 0 1 1230.0 632.5 H1226.0 A1.5 1.5 0 0 1 1224.5 631.0 V385.5 Z" stroke="#fff" stroke-width="1.1" fill="none" stroke-dasharray="3 1.3"/>
<rect x="1155.0" y="445.4" width="23.0" height="2.2" fill="#1414ff" opacity="0.8"/>
<text x="1155.0" y="447.4" textLength="23.0" lengthAdjust="spacingAndGlyphs" font-family="Liberation Sans" font-weight="bold" font-size="5.2" fill="#1414ff" stroke="#1414ff" stroke-width="0.35">Бок кармана 2</text>
<rect x="1153.2" y="447.8" width="1" height="1" fill="#fff"/>
<line x1="1180.0" y1="448.5" x2="1192.5" y2="463.6" stroke="#fff" stroke-width="1"/>
<line x1="1180.0" y1="448.5" x2="1228.5" y2="462.6" stroke="#fff" stroke-width="1"/>
<path d="M1311.5 354.5 H1326.5 A13 13 0 0 1 1339.5 367.5 V554.7 L1342.5 575.2 V640.5 H1295.5 V570 L1297.5 547 L1298.5 546 V367.5 A13 13 0 0 1 1311.5 354.5 Z" stroke="#fff" stroke-width="1.15" fill="none"/>
<line x1="1295.5" y1="577.5" x2="1342.5" y2="577.5" stroke="#fff" stroke-width="1.15" fill="none"/>
<path d="M1303.5 550.8 V368.5 A8.5 8.5 0 0 1 1312 360 H1326 A8.5 8.5 0 0 1 1334.5 368.5 V556.6 L1336.5 566.2 V577.5" stroke="#fff" stroke-width="1.1" fill="none" stroke-dasharray="3 1.3"/>
<path d="M1303.5 550.8 L1300.5 572 V577.5" stroke="#fff" stroke-width="1.1" fill="none" stroke-dasharray="3 1.3"/>
<path d="M1300.5 577.5 H1336.5 V634.5 H1300.5 Z" stroke="#fff" stroke-width="1" fill="none" stroke-dasharray="4 1.5"/>
<line x1="1298.5" y1="375.5" x2="1339.5" y2="375.5" stroke="#fff" stroke-width="1" stroke-dasharray="4 1.5"/>
<line x1="1298.5" y1="427.5" x2="1339.5" y2="427.5" stroke="#fff" stroke-width="1" stroke-dasharray="4 1.5"/>
<line x1="1298.5" y1="443.5" x2="1339.5" y2="443.5" stroke="#fff" stroke-width="1" stroke-dasharray="4 1.5"/>
<path d="M1339.5 427.5 H1351.5 V443.5 H1339.5 M1351.5 433.5 H1350.5 V438.5 H1351.5" stroke="#00ff00" stroke-width="1" fill="none" shape-rendering="crispEdges"/>
<rect x="1270.0" y="409.4" width="10.0" height="2.2" fill="#1414ff" opacity="0.8"/>
<text x="1270.0" y="411.4" textLength="10.0" lengthAdjust="spacingAndGlyphs" font-family="Liberation Sans" font-weight="bold" font-size="5.2" fill="#1414ff" stroke="#1414ff" stroke-width="0.35">Лямка</text>
<line x1="1281.0" y1="412.6" x2="1317.6" y2="448.8" stroke="#fff" stroke-width="1"/>
<path d="M1391.5 362.5 H1405.5 A6 6 0 0 1 1411.5 368.5 V548 L1413.5 569 V632.5 H1382.5 V569 L1385.5 548 V368.5 A6 6 0 0 1 1391.5 362.5 Z" stroke="#fff" stroke-width="1.15" fill="none"/>
<rect x="1437.5" y="425.6" width="32.0" height="2.2" fill="#1414ff" opacity="0.8"/>
<text x="1437.5" y="427.6" textLength="32.0" lengthAdjust="spacingAndGlyphs" font-family="Liberation Sans" font-weight="bold" font-size="5.2" fill="#1414ff" stroke="#1414ff" stroke-width="0.35">Наполнитель лямки</text>
<line x1="1436.5" y1="428.4" x2="1470.5" y2="428.4" stroke="#fff" stroke-width="1"/>
<line x1="1436.0" y1="428.8" x2="1398.9" y2="455.0" stroke="#fff" stroke-width="1"/>
<path d="M1437 561.5 H1517 M1477.5 522 V601 M1473.5 557.5 H1481.5 V565.5 H1473.5 Z" stroke="#fff" stroke-width="1" fill="none" shape-rendering="crispEdges"/>
<path d="M274.5 692.5 H291.5 V709.5 H274.5 Z M283.5 692 V613 M283.5 613 L277 634.5 H290 Z M292 700.5 H371 M371 700.5 L349.5 694 V707 Z M277 589 L283.5 596 L290 589 M283.5 596 V601 M383 695 L395 707 M395 695 L383 707" stroke="#fff" stroke-width="1" fill="none"/>
<text x="368.7" y="455.0" textLength="130.3" lengthAdjust="spacingAndGlyphs" font-family="Liberation Mono" font-size="6.1" fill="#fff" stroke="#fff" stroke-width="0.12">Высота нижней части (которая без</text>
<text x="368.7" y="461.8" textLength="63.8" lengthAdjust="spacingAndGlyphs" font-family="Liberation Mono" font-size="6.1" fill="#fff" stroke="#fff" stroke-width="0.12">молнии) = 120 мм</text>
<text x="368.7" y="475.9" textLength="82.3" lengthAdjust="spacingAndGlyphs" font-family="Liberation Mono" font-size="6.1" fill="#fff" stroke="#fff" stroke-width="0.12">Ее периметр = 447 мм</text>
<text x="368.7" y="489.6" textLength="117.8" lengthAdjust="spacingAndGlyphs" font-family="Liberation Mono" font-size="6.1" fill="#fff" stroke="#fff" stroke-width="0.12">Высота прямолинейного участка</text>
<text x="368.7" y="496.4" textLength="80.8" lengthAdjust="spacingAndGlyphs" font-family="Liberation Mono" font-size="6.1" fill="#fff" stroke="#fff" stroke-width="0.12">нижней части = 70 мм</text>
<text x="368.7" y="510.4" textLength="124.8" lengthAdjust="spacingAndGlyphs" font-family="Liberation Mono" font-size="6.1" fill="#fff" stroke="#fff" stroke-width="0.12">Периметр всего переда = 1140 мм</text>
<text x="368.7" y="517.3" textLength="124.8" lengthAdjust="spacingAndGlyphs" font-family="Liberation Mono" font-size="6.1" fill="#fff" stroke="#fff" stroke-width="0.12">Припуски на соединение входа и</text>
<text x="368.7" y="524.2" textLength="85.3" lengthAdjust="spacingAndGlyphs" font-family="Liberation Mono" font-size="6.1" fill="#fff" stroke="#fff" stroke-width="0.12">нитью боковины = 15 мм</text>
<text x="368.7" y="537.9" textLength="131.3" lengthAdjust="spacingAndGlyphs" font-family="Liberation Mono" font-size="6.1" fill="#fff" stroke="#fff" stroke-width="0.12">Длина нижней части боковины (без</text>
<text x="368.7" y="544.7" textLength="64.3" lengthAdjust="spacingAndGlyphs" font-family="Liberation Mono" font-size="6.1" fill="#fff" stroke="#fff" stroke-width="0.12">припусков) = 447</text>
<text x="368.7" y="558.4" textLength="135.3" lengthAdjust="spacingAndGlyphs" font-family="Liberation Mono" font-size="6.1" fill="#fff" stroke="#fff" stroke-width="0.12">Длина верхней части боковины (без</text>
<text x="368.7" y="565.3" textLength="115.3" lengthAdjust="spacingAndGlyphs" font-family="Liberation Mono" font-size="6.1" fill="#fff" stroke="#fff" stroke-width="0.12">припусков) = 1140 - 447 = 693</text>
<text x="696.3" y="224.0" textLength="96.7" lengthAdjust="spacingAndGlyphs" font-family="Liberation Sans" font-size="5.9" fill="#fff" font-style="italic" font-weight="bold" stroke="#fff" stroke-width="0.15">Внутренний карман (детали сначала</text>
<text x="696.3" y="230.9" textLength="117.7" lengthAdjust="spacingAndGlyphs" font-family="Liberation Sans" font-size="5.9" fill="#fff" font-style="italic" font-weight="bold" stroke="#fff" stroke-width="0.15">подгибаются на 10 мм, а потом оставшиеся</text>
<text x="696.3" y="238.0" textLength="117.7" lengthAdjust="spacingAndGlyphs" font-family="Liberation Sans" font-size="5.9" fill="#fff" font-style="italic" font-weight="bold" stroke="#fff" stroke-width="0.15">15 мм запаса по правой стороне обрабатыв.</text>
<text x="696.3" y="245.0" textLength="118.7" lengthAdjust="spacingAndGlyphs" font-family="Liberation Sans" font-size="5.9" fill="#fff" font-style="italic" font-weight="bold" stroke="#fff" stroke-width="0.15">потом туда будет продет либо повязкой,</text>
<text x="696.3" y="252.0" textLength="56.2" lengthAdjust="spacingAndGlyphs" font-family="Liberation Sans" font-size="5.9" fill="#fff" font-style="italic" font-weight="bold" stroke="#fff" stroke-width="0.15">либо резиновый шнур</text>
<text x="696.3" y="265.6" textLength="121.2" lengthAdjust="spacingAndGlyphs" font-family="Liberation Sans" font-size="5.9" fill="#fff" font-style="italic" font-weight="bold" stroke="#fff" stroke-width="0.15">Там надо будет кое-что (вставить надписи о</text>
<text x="696.3" y="272.7" textLength="103.7" lengthAdjust="spacingAndGlyphs" font-family="Liberation Sans" font-size="5.9" fill="#fff" font-style="italic" font-weight="bold" stroke="#fff" stroke-width="0.15">том как поз., где будет вшиваться шнур</text>
<text x="1002.5" y="408.4" textLength="129.1" lengthAdjust="spacingAndGlyphs" font-family="Liberation Sans" font-size="5.6" fill="#fff" font-weight="bold" stroke="#fff" stroke-width="0.1">Высота нижней части кармана без молнии = 80</text>
<text x="1002.5" y="422.3" textLength="81.5" lengthAdjust="spacingAndGlyphs" font-family="Liberation Sans" font-size="5.6" fill="#fff" font-weight="bold" stroke="#fff" stroke-width="0.1">Периметр нижней части = 381</text>
<text x="1002.5" y="436.1" textLength="103.5" lengthAdjust="spacingAndGlyphs" font-family="Liberation Sans" font-size="5.6" fill="#fff" font-weight="bold" stroke="#fff" stroke-width="0.1">Полный периметр дуги кармана = 775</text>
<text x="1002.5" y="450.4" textLength="122.5" lengthAdjust="spacingAndGlyphs" font-family="Liberation Sans" font-size="5.6" fill="#fff" font-weight="bold" stroke="#fff" stroke-width="0.1">Длина верхней части боковины кармана (без</text>
<text x="1002.5" y="457.3" textLength="77.5" lengthAdjust="spacingAndGlyphs" font-family="Liberation Sans" font-size="5.6" fill="#fff" font-weight="bold" stroke="#fff" stroke-width="0.1">припусков) = 775 - 381 = 474</text>
</svg><div style="position:absolute;left:18px;top:767px;width:1551.5px;height:67px;background:#f0f0f0"></div><div style="position:absolute;left:18px;top:767px;width:19px;height:67px;background:#f0f0f0;border-right:1px solid #888;box-sizing:border-box"></div><div style="position:absolute;left:18px;top:766.2px;width:1551.5px;height:1.3px;background:#c4c4c4"></div><div style="position:absolute;left:37px;top:819.5px;width:1532px;height:1px;background:#8a8a8a"></div><div style="position:absolute;left:37px;top:820.5px;width:1532px;height:14px;background:#fff"></div><div style="position:absolute;left:37px;top:768.5px;width:1510px;height:51px;overflow:hidden"><div class="t" style="left:1.5px;top:-5.4px;font-family:'Liberation Mono',monospace;font-size:11.7px;line-height:14px;color:#111">nanoCAD 5.1 5.1.2524.1471, © 2008-2013 Nanosoft</div><div class="t" style="left:1.5px;top:21.6px;font-family:'Liberation Mono',monospace;font-size:11.7px;line-height:14px;color:#111">startscr - Экран приветствия</div><div class="t" style="left:1.5px;top:35.1px;font-family:'Liberation Mono',monospace;font-size:11.7px;line-height:14px;color:#111">OPEN,ИМПОРТА,ОТКРЫТЬ,УРЛОТКРОЙ - Открыть...</div></div><div class="t" style="left:38.5px;top:821.5px;font-family:'Liberation Mono',monospace;font-size:11.7px;line-height:14px;color:#111">Команда:</div><div style="position:absolute;left:97.5px;top:822.5px;width:1px;height:12px;background:#000"></div><svg style="position:absolute;left:18px;top:767px" width="19" height="67" viewBox="18 767 19 67"><path d="M23.5 772.5l7 7 M30.5 772.5l-7 7" stroke="#333" stroke-width="1.2" fill="none"/><path d="M29.5 792.5h-5 M29.5 796.5h-5 M29.5 792.5v4 M24.5 791v7 M24.5 794.5h-3.5" stroke="#333" stroke-width="1" fill="none"/></svg><div class="t" style="left:21px;top:834px;transform-origin:0 0;transform:rotate(-90deg);color:#444;font-size:12px;width:32px;overflow:hidden">Команд</div><div style="position:absolute;left:1550px;top:768.5px;width:18px;height:51px;background:#f0f0f0"></div><svg style="position:absolute;left:1550px;top:768px" width="18" height="52" viewBox="1550 768 18 52"><path d="M1555.5 779.5l4-4 4 4 M1555.5 807.5l4 4 4-4" stroke="#444" stroke-width="1.7" fill="none"/></svg><svg style="position:absolute;left:0;top:0;pointer-events:none" width="1593" height="834" viewBox="0 0 1593 834"><defs>
<linearGradient id="gb" x1="0" y1="0" x2="1" y2="1"><stop offset="0" stop-color="#eaf6fd"/><stop offset="1" stop-color="#9fd4f2"/></linearGradient>
<linearGradient id="gb2" x1="0" y1="0" x2="0" y2="1"><stop offset="0" stop-color="#c9e9fa"/><stop offset="1" stop-color="#5db9ec"/></linearGradient>
<linearGradient id="gg" x1="0" y1="0" x2="0" y2="1"><stop offset="0" stop-color="#e8e8e8"/><stop offset="1" stop-color="#a8a8a8"/></linearGradient>
<linearGradient id="gg2" x1="0" y1="0" x2="0" y2="1"><stop offset="0" stop-color="#e6e6e6"/><stop offset="1" stop-color="#c2c2c2"/></linearGradient>
<linearGradient id="gnb" x1="0" y1="0" x2="0" y2="1"><stop offset="0" stop-color="#22aef2"/><stop offset="1" stop-color="#0a5cc0"/></linearGradient><linearGradient id="gng" x1="0" y1="0" x2="0" y2="1"><stop offset="0" stop-color="#72cf52"/><stop offset="1" stop-color="#2a8c1a"/></linearGradient>
<radialGradient id="glens" cx="0.35" cy="0.3" r="0.8"><stop offset="0" stop-color="#f4fbff"/><stop offset="1" stop-color="#a5d8f3"/></radialGradient>
<radialGradient id="ghelp" cx="0.4" cy="0.3" r="0.8"><stop offset="0" stop-color="#6db5f5"/><stop offset="1" stop-color="#0d56c2"/></radialGradient>
<radialGradient id="gbomb" cx="0.35" cy="0.3" r="0.8"><stop offset="0" stop-color="#999"/><stop offset="0.5" stop-color="#333"/><stop offset="1" stop-color="#000"/></radialGradient>
<radialGradient id="ggreen" cx="0.35" cy="0.3" r="0.8"><stop offset="0" stop-color="#5fe07a"/><stop offset="1" stop-color="#0a9a2a"/></radialGradient>
<radialGradient id="gblue" cx="0.35" cy="0.3" r="0.8"><stop offset="0" stop-color="#bfe6fb"/><stop offset="1" stop-color="#3aa6e6"/></radialGradient>
<linearGradient id="ggold" x1="0" y1="0" x2="1" y2="1"><stop offset="0" stop-color="#f3e2b0"/><stop offset="1" stop-color="#b08a3a"/></linearGradient>
<g id="tri"><path d="M4 0V4H0Z" fill="#2f8fe8"/></g>
<g id="cur"><path d="M0 0V9.5L2.3 7.4L4 11L5.6 10.3L4 6.8H7Z" fill="#fff" stroke="#111" stroke-width="0.9"/></g>
<g id="curb"><path d="M0 0V10L2.4 7.8L4.2 11.6L6 10.8L4.3 7.2H7.5Z" fill="#000" stroke="#fff" stroke-width="0.9"/></g>
<g id="hb"><rect x="-1.5" y="-1.5" width="3" height="3" fill="#fff" stroke="#0a5fd8" stroke-width="1"/></g>
<g id="bulb"><path d="M6 0.6C2.8 0.6 1 3 1 5.3C1 7.3 2.3 8.2 3.2 9.6C3.6 10.3 3.7 10.8 3.7 11.3H8.3C8.3 10.8 8.4 10.3 8.8 9.6C9.7 8.2 11 7.3 11 5.3C11 3 9.2 0.6 6 0.6Z" fill="#fff8d8" stroke="#e8a41c" stroke-width="1"/><path d="M3.8 11.5H8.2V13.2C8.2 14.3 7.2 15 6 15C4.8 15 3.8 14.3 3.8 13.2Z" fill="#555"/><rect x="5" y="12.3" width="2" height="1.2" fill="#ddd"/></g>
<g id="sun"><g stroke="#e89a10" stroke-width="2" stroke-linecap="round"><path d="M7.7 1V14.4 M1 7.7H14.4 M3 3L12.4 12.4 M12.4 3L3 12.4 M5.1 1.5L10.3 13.9 M10.3 1.5L5.1 13.9 M1.5 5.1L13.9 10.3 M1.5 10.3L13.9 5.1"/></g><circle cx="7.7" cy="7.7" r="4.6" fill="#fff23a" stroke="#f0b21a" stroke-width="0.8"/></g>
<g id="lock"><path d="M8.5 7V4.2C8.5 2.4 9.8 1.2 11.5 1.2C13.2 1.2 14.5 2.4 14.5 4.2V5.5" fill="none" stroke="#b8923a" stroke-width="1.8"/><rect x="0.7" y="6.7" width="10.3" height="7.8" rx="1" fill="url(#ggold)" stroke="#a67f2c" stroke-width="1"/></g>
<g id="sw"><rect x="0.5" y="0.5" width="10" height="10" fill="#fff" stroke="#000"/><path d="M0.5 0.5H10.5V10.5Z" fill="#000"/></g>
</defs><g transform="translate(8 54)"><path d="M0.5 0.5H7.5 L11.5 4.5 V15.5 H0.5Z" fill="url(#gb)" stroke="#444"/><path d="M7.5 0.5V4.5H11.5" fill="#fff" stroke="#444" stroke-width="0.9"/></g><g transform="translate(27 56)"><path d="M0.5 11.5V0.8H5.5L7 2.8H12.5V5" fill="#8c8c8c" stroke="#555"/><path d="M0.8 11.5L4.2 4.8H15.5L12 11.5Z" fill="url(#gb2)" stroke="#444"/></g><g transform="translate(48 54)"><path d="M0.5 0.5H12.5L15.5 3.5V15.5H0.5Z" fill="url(#gb2)" stroke="#444"/><path d="M3.5 0.5H11.5V5.5H3.5Z" fill="#f2f2f2" stroke="#444"/><rect x="8.3" y="1.6" width="1.8" height="2.8" fill="#444"/><path d="M3.5 9.5H12.5V15.5H3.5Z" fill="#fff" stroke="#444"/><path d="M5 11.5H11 M5 13.5H11" stroke="#555"/></g><g transform="translate(77.5 54)"><path d="M0.6 8.4L3.5 6.8L6 8.7V15L3.1 14.7L0.6 12.7Z" fill="#bfe6f6" stroke="#2a4cf0" stroke-width="1"/><path d="M4.8 8.7L11.5 5.2L14.3 7.5V10.5L7 15.7L4.8 14Z" fill="#7c88ad"/><path d="M5.3 10.3L12.3 6.6 M6 12.2L13.2 8.3" stroke="#dfe5f4" stroke-width="1"/><path d="M7.8 14.3L13.3 11" stroke="#eef1fa" stroke-width="1.5"/><path d="M11.5 5.2L14.3 7.5V9.6" fill="none" stroke="#000" stroke-width="1.3"/><path d="M2.8 3.4L6.3 1.2L8.8 4L6 8L3.1 5.8Z" fill="#f2f9ff"/><path d="M0.5 3.6L5.1 0.4H6.9" fill="none" stroke="#1a7af0" stroke-width="1.4"/><path d="M9.2 3.3V5.2 M2.6 5L2.6 8" stroke="#1a7af0" stroke-width="1.2"/><path d="M6.9 0.4L8.7 2.3" stroke="#000" stroke-width="1.3"/><circle cx="3" cy="5.6" r="0.7" fill="#000"/></g><g transform="translate(98 54)"><path d="M0.5 0.5H7.5 L11.0 4.0 V16.0 H0.5Z" fill="#d3ebf9" stroke="#444"/><path d="M7.5 0.5V4.0H11.0" fill="#fff" stroke="#444" stroke-width="0.9"/><path d="M11.7 11.5L15.8 15.6" stroke="#2a7fe0" stroke-width="1.6"/><circle cx="8.2" cy="8" r="5" fill="#e4f4fc" stroke="#333" stroke-width="1.1"/><path d="M6.3 10.2L8.2 5.4L10.1 10.2 M7 8.6H9.4" stroke="#333" stroke-width="0.9" fill="none"/></g><g transform="translate(118.8 54)"><path d="M0.6 8.4L3.5 6.8L6 8.7V15L3.1 14.7L0.6 12.7Z" fill="#bfe6f6" stroke="#2a4cf0" stroke-width="1"/><path d="M4.8 8.7L11.5 5.2L14.3 7.5V10.5L7 15.7L4.8 14Z" fill="#7c88ad"/><path d="M5.3 10.3L12.3 6.6 M6 12.2L13.2 8.3" stroke="#dfe5f4" stroke-width="1"/><path d="M7.8 14.3L13.3 11" stroke="#eef1fa" stroke-width="1.5"/><path d="M11.5 5.2L14.3 7.5V9.6" fill="none" stroke="#000" stroke-width="1.3"/><path d="M2.8 3.4L6.3 1.2L8.8 4L6 8L3.1 5.8Z" fill="#f2f9ff"/><path d="M0.5 3.6L5.1 0.4H6.9" fill="none" stroke="#1a7af0" stroke-width="1.4"/><path d="M9.2 3.3V5.2 M2.6 5L2.6 8" stroke="#1a7af0" stroke-width="1.2"/><path d="M6.9 0.4L8.7 2.3" stroke="#000" stroke-width="1.3"/><circle cx="3" cy="5.6" r="0.7" fill="#000"/><g transform="translate(11.3 11.5)"><g stroke="#e0126e" stroke-width="2.2"><path d="M0 -4.6V4.6 M-4.6 0H4.6 M-3.3 -3.3L3.3 3.3 M3.3 -3.3L-3.3 3.3"/></g><circle r="3.1" fill="#e0126e"/><circle r="1.5" fill="#7080b8"/></g></g><g transform="translate(140 54)"><path d="M4 6V0.6H10L12.8 3.4V6" fill="#e6f3fb" stroke="#444"/><path d="M0.8 6.2H14.5V12.5H12V15.5H3.5V12.5H0.8Z" fill="#f4f4f4" stroke="#444"/><rect x="2.5" y="8" width="7" height="2.5" fill="#4aa8e8"/><path d="M5 15.5L14.8 4.5" stroke="#222" stroke-width="2.6"/><path d="M10.5 9.3L15.5 3.6" stroke="#1f6fd6" stroke-width="2.6"/><path d="M4 16L7 12.5" stroke="#555" stroke-width="3"/></g><g transform="translate(168.5 54.5)"><path d="M1 0.3L10.8 11L8.6 12.2L0.2 2.6Z" fill="#d4d4d4" stroke="#444" stroke-width="0.8"/><path d="M15.2 0.3L5.4 11L7.6 12.2L16 2.6Z" fill="#c0c0c0" stroke="#444" stroke-width="0.8"/><circle cx="8.1" cy="9" r="1.1" fill="#fff" stroke="#444" stroke-width="0.6"/><circle cx="4.3" cy="13.2" r="2.1" fill="none" stroke="#1f8fe0" stroke-width="1.5"/><circle cx="11.9" cy="13.2" r="2.1" fill="none" stroke="#1f8fe0" stroke-width="1.5"/></g><g transform="translate(190 54)"><path d="M0.5 0.5H6.5L8 2V12.5H0.5Z" fill="#f0f0f0" stroke="#444"/><path d="M2 3h1 M2 5h1 M2 7h1 M2 9h1" stroke="#999"/><g transform="translate(5 3)"><path d="M0.5 0.5H7.5 L10.5 3.5 V13.0 H0.5Z" fill="#fff" stroke="#444"/><path d="M7.5 0.5V3.5H10.5" fill="#fff" stroke="#444" stroke-width="0.9"/><path d="M2.5 4.5h6 M2.5 6.5h6 M2.5 8.5h6 M2.5 10.5h6" stroke="#6ab4e8"/></g></g><g transform="translate(211 54)"><path d="M0.5 1.5H10.5V13.5H0.5Z" fill="#2ea2e8" stroke="#444"/><path d="M3 2.5C3 0 8 0 8 2.5Z" fill="#e8f4fc" stroke="#444" stroke-width="0.8"/><g transform="translate(6 5)"><path d="M0.5 0.5H7.0 L10.0 3.5 V11.0 H0.5Z" fill="#fff" stroke="#444"/><path d="M7.0 0.5V3.5H10.0" fill="#fff" stroke="#444" stroke-width="0.9"/><path d="M2.5 4.5h5 M2.5 6.5h5 M2.5 8.5h5" stroke="#6ab4e8"/></g></g><g transform="translate(232 54)"><path d="M0.5 0.5H12.5V15.5H0.5Z" fill="#f4f4f4" stroke="#444"/><rect x="1" y="1" width="11" height="2.6" fill="#2a96e0"/><path d="M4 5.5v3 M7 5.5l1.5 2" stroke="#555" stroke-width="0.8"/><path d="M4 11.5C6 9 9 10 10.5 13.5L8.5 15Z" fill="#333"/><path d="M9.5 11.5L15.5 6" stroke="#1a5fc8" stroke-width="2.2"/><path d="M9.3 9.5l3 3" stroke="#fff" stroke-width="1.1" stroke-dasharray="1 1"/></g><g transform="translate(253 54)"><path d="M0 15.5H16" stroke="#111" stroke-width="1.2"/><path d="M10.28 9.620000000000001L15.5 1.5" stroke="#3b96e0" stroke-width="4.8" stroke-linecap="butt"/><path d="M9.02 11.58L10.28 9.620000000000001" stroke="#e4e4e4" stroke-width="4.4"/><path d="M7.22 14.379999999999999L8.84 11.86" stroke="#e8683a" stroke-width="4" stroke-linecap="round"/></g><g transform="translate(282 54)"><path d="M0.3 7.5L7.2 0.5V3.8H11C14 3.8 15.8 6 15.8 8.8V11.5H12.4V9.8C12.4 8.6 11.8 8 10.6 8H7.2V14Z" fill="url(#gg2)" stroke="#b4b4b4" stroke-width="0.8"/></g><g transform="translate(319.5 54)"><g transform="scale(-1 1)"><path d="M0.3 7.5L7.2 0.5V3.8H11C14 3.8 15.8 6 15.8 8.8V11.5H12.4V9.8C12.4 8.6 11.8 8 10.6 8H7.2V14Z" fill="url(#gg2)" stroke="#b4b4b4" stroke-width="0.8"/></g></g><g transform="translate(334 54)"><path d="M1 2.5L4.5 0.8L8.5 2L12.5 7.5L13.5 13L10.5 15.5L6.5 14L2.5 9.5L4.2 8.6L2 5.5Z" fill="#eeb3a2" stroke="#7a3d30" stroke-width="0.8"/><path d="M3 2.5L8 8 M5 1.8L9.8 7.5 M7 2L11.5 8" stroke="#b46a58" stroke-width="0.7"/><path d="M14.5 10.5V15.5H9.5Z" fill="#0d47c4"/></g><g transform="translate(353 54)"><circle cx="6.5" cy="6.3" r="5.8" fill="#dfe3e8" stroke="#333" stroke-width="1"/><path d="M6.5 2.5V6.5H3.2 M6.5 6.5L8 8" stroke="#333" stroke-width="0.9" fill="none"/><path d="M13.45 13.45L16 16" stroke="#2a7fe0" stroke-width="1.6"/><circle cx="11" cy="11" r="3.5" fill="url(#glens)" stroke="#333" stroke-width="1.1"/></g><g transform="translate(382 54)"><path d="M0.6 0.6H15.4V15.4H0.6Z" fill="none" stroke="#e01010" stroke-width="1.2"/><path d="M11.7 11.2L16 16" stroke="#2a7fe0" stroke-width="1.6"/><circle cx="7.5" cy="7" r="6" fill="url(#glens)" stroke="#333" stroke-width="1.1"/></g><g transform="translate(403 54)"><path d="M0.6 0.6H10.5V10.5H0.6Z" fill="none" stroke="#1f9ae0" stroke-width="1.2"/><path d="M11.79 11.79L16 16" stroke="#2a7fe0" stroke-width="1.6"/><circle cx="8.5" cy="8.5" r="4.7" fill="url(#glens)" stroke="#333" stroke-width="1.1"/><path d="M5.5 5.5H10.2V10.2H5.5Z" fill="#bfe3f7" stroke="#1f9ae0" stroke-width="0.5"/></g><g transform="translate(424.5 54)"><path d="M11.059999999999999 11.36L15.5 15.5" stroke="#2a7fe0" stroke-width="1.6"/><circle cx="7" cy="7.3" r="5.8" fill="#e8f2f8" stroke="#333" stroke-width="1.1"/><path d="M3.8 4.8H10.2V10H3.8Z" fill="#bfe3f7" stroke="#333" stroke-width="1"/><path d="M3.8 5.6H10.2" stroke="#333" stroke-width="1.4"/></g><g transform="translate(452.5 55)"><path d="M1 0V15 M16 0V15" stroke="#333" stroke-width="1.2"/><path d="M3 7.5H14 M5.5 5L3 7.5L5.5 10 M11.5 5L14 7.5L11.5 10" stroke="#199ce0" stroke-width="1.3" fill="none"/></g><g transform="translate(475 55)"><path d="M0.5 11.5L11.5 0.5L14.3 3.3L3.3 14.3Z" fill="#f2d53a" stroke="#b89a18" stroke-width="0.9"/><path d="M4 10.2l1.2 1.2 M6.2 8l1.2 1.2 M8.4 5.8l1.2 1.2 M10.6 3.6l1.2 1.2" stroke="#6a5a10" stroke-width="0.8"/></g><g transform="translate(503 54)"><circle cx="8" cy="8" r="7.7" fill="url(#ghelp)" stroke="#0c48a8" stroke-width="0.6"/><text x="8" y="12.3" text-anchor="middle" font-family="Liberation Sans" font-weight="bold" font-size="12" fill="#fff">?</text></g><g transform="translate(535 54)"><text transform="translate(-0.6 14.1) scale(0.82 1)" font-family="Liberation Serif" font-size="21.5" fill="#3a3a3a">T</text><path d="M7 15L10.5 11" stroke="#666" stroke-width="2.4"/><path d="M10 11.5L14.8 6" stroke="#1f5fd0" stroke-width="2"/><g transform="translate(13 3.5)"><path d="M0 -3.5V3.5 M-3.5 0H3.5 M-2.4 -2.4L2.4 2.4 M2.4 -2.4L-2.4 2.4" stroke="#f59a18" stroke-width="1"/><circle r="1.8" fill="#ffe23a"/></g></g><g transform="translate(773 54)"><path d="M0.5 0.5V6 M13.5 0.5V6 M0.5 3.2H13.5" stroke="#333" stroke-width="1.1"/><path d="M5 15.5L9 11" stroke="#666" stroke-width="2.6"/><path d="M8.5 11.5L14.5 4.5" stroke="#1f5fd0" stroke-width="2.2"/></g><g transform="translate(1017 54)"><path d="M0 2.5Q0 0 2.5 0H8.7V6H5.3V15.8H0Z" fill="url(#gnb)"/><path d="M8.7 0H14V11.8Q14 15.8 10 15.8H4.7V10H9V6H8.7Z" fill="url(#gng)"/><rect x="5.3" y="6" width="3.7" height="4" fill="#e6edf3"/></g><g transform="translate(-5.5 3)"><path d="M0.5 0H8V15.5H0.5Z" fill="#1f8fe0"/><path d="M7 0H17V9C17 14 14 16 9 16H5V11H7Z" fill="#4a4a4a"/><path d="M9 0H17V9C17 13 15 15 12 15.5Z" fill="#8a8a8a"/><path d="M8 3.5H11.5V11H8Z" fill="#f4f4f4"/><path d="M5 11L8 8V16H5Z" fill="#1668c0"/></g><g transform="translate(5.5 77.5)"><rect x="0.6" y="0.6" width="6.5" height="6.5" fill="#fff" stroke="#2a3fe0" stroke-width="1.1"/><rect x="3.1" y="3.1" width="6.5" height="6.5" fill="#fff" stroke="#2a3fe0" stroke-width="1.1"/><rect x="5.6" y="5.6" width="6.5" height="6.5" fill="#fff" stroke="#2a3fe0" stroke-width="1.1"/><path d="M0 6.5L2.5 8.5L0 9.5Z M1.5 9.5l2.5 1.5-2.5 1.5Z" fill="#18b018"/><path d="M4 14L8.5 8L13 14Z" fill="#12b012" stroke="#0a7a0a" stroke-width="0.6"/><circle cx="12.8" cy="12.3" r="2.6" fill="#fff" stroke="#f0b010" stroke-width="1.7"/></g><g transform="translate(35 78)"><path d="M0.8 0V7 M15.2 0V7 M0.8 2.7H15.2" stroke="#1d4f91" stroke-width="1.3"/><path d="M4.5 0.7L1 2.7L4.5 4.7Z M11.5 0.7L15 2.7L11.5 4.7Z" fill="#1d4f91"/><use href="#curb" x="8.3" y="4.3"/></g><g transform="translate(56 81.5)"><path d="M0.8 0V7.5 M15.2 0V7.5 M0.8 3.7H15.2" stroke="#1d4f91" stroke-width="1.3"/><path d="M4.5 1.7L1 3.7L4.5 5.7Z M11.5 1.7L15 3.7L11.5 5.7Z" fill="#1d4f91"/></g><use href="#tri" x="70" y="92"/><g transform="translate(78 78)"><circle cx="7.5" cy="7.5" r="7" fill="none" stroke="#8a8a8a" stroke-width="1.2"/><path d="M3.5 3.5L11.5 11.5" stroke="#1d4f91" stroke-width="1.2"/><path d="M2.5 2.5L6.2 3.6L3.6 6.2Z M12.5 12.5L8.8 11.4L11.4 8.8Z" fill="#1d4f91"/></g><use href="#tri" x="91" y="92"/><g transform="translate(98 78)"><path d="M0.8 0V10 M15.2 0V10 M0.8 2.2H15.2 M5.5 0.5V4 M10.5 0.5V4" stroke="#1d4f91" stroke-width="1.2"/><path d="M0.8 2.2h1.5 M13.7 2.2h1.5" stroke="#e02020" stroke-width="1.2"/><path d="M1 8.5H7.5V11.5H15V15H1Z" fill="none" stroke="#777" stroke-width="1.1" stroke-dasharray="2.5 1.2"/></g><use href="#tri" x="112" y="92"/><g transform="translate(119.5 78)"><path d="M8 0V3.5 M8 12.5V16" stroke="#e03030" stroke-width="1.3"/><path d="M8 5.5V10.5" stroke="#e03030" stroke-width="1.1"/><path d="M1 3V15.5 M1 8H14.5" stroke="#1d4f91" stroke-width="1.3"/><path d="M5.5 8L10.5 5.8V10.2Z" fill="#1d4f91"/><rect x="7" y="6.6" width="3.5" height="2.8" fill="#1d4f91"/></g><use href="#tri" x="133" y="92"/><g transform="translate(148.5 78)"><path d="M1 13L7.5 7.5H14.5" stroke="#1d4f91" stroke-width="1.3" fill="none"/><path d="M0.3 14L2 9.8L4.6 12.8Z" fill="#1d4f91"/><path d="M9 6L11.3 0.5L13.6 6 M9.8 4H12.8" stroke="#e03030" stroke-width="1.1" fill="none"/><path d="M8.5 12.5H13.5 M11 10V15" stroke="#e03030" stroke-width="1.3"/></g><use href="#tri" x="161" y="92"/><g transform="translate(169 78)"><path d="M1 11L10 1.5H15" stroke="#1d4f91" stroke-width="1.3" fill="none"/><path d="M0 12.2L2 8L4.6 10.6Z" fill="#1d4f91"/><path d="M10 1.5L8 13" stroke="#e03030" stroke-width="1.1"/><path d="M6.6 10.5L8 14.5L9.6 10.8Z" fill="#e03030"/><path d="M11 11.5H16" stroke="#e03030" stroke-width="1.3"/></g><use href="#tri" x="182" y="92"/><g transform="translate(197.5 78)"><rect x="3" y="0.5" width="12.5" height="10" fill="#eef5fc" stroke="#2f6fd0" stroke-width="1"/><path d="M0.5 5.5H10.5V15H0.5Z" fill="#fff"/><path d="M0.5 5.5H10.5V15" fill="none" stroke="#8a1010" stroke-width="1.1"/><rect x="0.8" y="7.5" width="7" height="7" fill="#c4e6a8"/><text x="1" y="14.8" font-family="Liberation Serif" font-weight="bold" font-size="11" fill="#1d7a1d">x</text><path d="M4 6C4.5 3 7 1.8 9 2.3" stroke="#d04848" stroke-width="1.6" fill="none"/><path d="M8 0L11.3 2.8L7.6 4.5Z" fill="#d04848"/></g><g transform="translate(219 78)"><rect x="0.5" y="0.5" width="12.5" height="10" fill="#eef5fc" stroke="#2f6fd0" stroke-width="1"/><path d="M5.5 5.5H15.5V15H5.5Z" fill="#fff"/><path d="M15.5 5.5H5.5V15" fill="none" stroke="#8a1010" stroke-width="1.1"/><rect x="8" y="7.5" width="7" height="7" fill="#c4e6a8"/><text x="8.3" y="14.8" font-family="Liberation Serif" font-weight="bold" font-size="11" fill="#1d7a1d">x</text><path d="M4 2C6.5 0.5 9 2 9.3 4.5" stroke="#d04848" stroke-width="1.6" fill="none"/><path d="M7.3 4L9.6 7.3L11.5 3.8Z" fill="#d04848"/></g><g transform="translate(240 78)"><rect x="2.5" y="0.5" width="12" height="10" fill="#dfeaf6" stroke="#2f5fa8"/><path d="M3 1.8h11" stroke="#2f5fa8" stroke-width="1.6" stroke-dasharray="2 1"/><rect x="0.5" y="3.5" width="12" height="10" fill="#eef3fa" stroke="#2f5fa8"/><path d="M1 4.8h11" stroke="#2f5fa8" stroke-width="1.6" stroke-dasharray="2 1"/><path d="M2.5 8.5h5 M2.5 10.5h5" stroke="#345" stroke-width="1"/><path d="M12 3.5L7 9.8H9.8L7.5 15.5L14.5 8.2H11.3L13.5 3.5Z" fill="#f5c518" stroke="#b8860b" stroke-width="0.6"/></g><g transform="translate(273 78)"><path d="M1 2H12.5V15H1Z" fill="#dfeaf2" stroke="#3a4a5a"/><path d="M4 2.5C4 0 9.5 0 9.5 2.5Z" fill="#c8d4de" stroke="#3a4a5a" stroke-width="0.9"/><path d="M3 5.5l1 1 1.5-2 M3 9l1 1 1.5-2" stroke="#222" stroke-width="0.9" fill="none"/><path d="M5.2 14.5L6.2 11L13 3.8L15.5 6L8.6 13.3Z" fill="#2eb82e" stroke="#1a6a1a" stroke-width="0.7"/><path d="M13 3.8L14 2.8L16 4.8L15.5 6Z" fill="#f0a0a0" stroke="#a55" stroke-width="0.5"/><path d="M5.2 14.5L6.2 11L8.6 13.3Z" fill="#f2c9a0"/><path d="M5.2 14.5l0.5-1.6 1.1 1.1Z" fill="#d03010"/></g><g transform="translate(301 78)"><path d="M3 2.5L5 0.5H15L13 2.5Z M2 5.5L4 3.5H14L12 5.5Z M1 8.5L3 6.5H13L11 8.5Z M1.5 11L3 9.5H9L8 11Z" fill="#f4f4f4" stroke="#444" stroke-width="0.9"/><path d="M11 10.5L15.3 15" stroke="#2a7fe0" stroke-width="2.2"/><path d="M14 13.8l1.3 1.3" stroke="#e07820" stroke-width="2.2"/><circle cx="8.5" cy="7.5" r="3.8" fill="#cfe6f5" stroke="#444" stroke-width="1.2"/><path d="M6.2 6.5h4.6 M6.2 8.3h4.6" stroke="#fff" stroke-width="0.9"/></g><use href="#bulb" x="334" y="78"/><use href="#sun" x="349" y="78"/><use href="#lock" x="366.5" y="77.5"/><use href="#sw" x="384" y="81"/><g transform="translate(23 124)"><rect x="1" y="0.5" width="14.5" height="14.5" fill="none" stroke="#3a3020" stroke-width="1.2" stroke-dasharray="1.1 1"/><rect x="3.5" y="3" width="9.5" height="9.5" fill="#eef4fb" stroke="#444" stroke-width="1" stroke-dasharray="1 1"/><path d="M8.2 5V10.6 M5.4 7.8H11" stroke="#1d4f91" stroke-width="1.7"/><circle cx="3.7" cy="3.2" r="1.1" fill="#fff" stroke="#333" stroke-width="0.6"/><circle cx="12.8" cy="12.4" r="1.1" fill="#fff" stroke="#333" stroke-width="0.6"/></g><g transform="translate(43 124)"><rect x="0.8" y="0.8" width="14.5" height="14.5" fill="url(#gb)" stroke="#222" stroke-width="1.3" stroke-dasharray="1.2 1.2"/><text x="8" y="13.3" text-anchor="middle" font-family="Liberation Sans" font-weight="bold" font-size="14.5" fill="#1d4f91">1</text></g><g transform="translate(71 124)"><rect x="0.8" y="0.8" width="14" height="14" fill="url(#gb)" stroke="#222" stroke-width="1.2" stroke-dasharray="3 1.3"/><use href="#cur" x="9.5" y="5"/></g><g transform="translate(91 124)"><path d="M7 1V9L1.5 5Z M1 11V15.5H8Z M9 0.8H15.5V8Z" fill="#dff1fb" stroke="#1f9ae0" stroke-width="1.2"/><path d="M7.5 9L1 15" stroke="#555" stroke-width="0.8"/><use href="#cur" x="9.5" y="5.5"/></g><g transform="translate(112 124)"><path d="M0.5 1.5H10.5L6.6 6V10L4.4 9V6Z" fill="#2a70c8" stroke="#1d4f91" stroke-width="0.8"/><path d="M12 4.5L6.5 10.5H9.5L6 15.5L13.8 9H10.8L13.5 5.5Z" fill="#f5d020" stroke="#a88a10" stroke-width="0.6"/></g><g transform="translate(139 124)"><path d="M0.5 5.5L2.5 3.5H6V5.5H11.5V15.5H0.5Z" fill="#9a9a9a" stroke="#7a7a7a"/><path d="M2 8.5h8 M2 10.5h8 M2 12.5h8" stroke="#b8b8b8" stroke-width="1.1"/><path d="M4.5 7V14 M7.5 7V14" stroke="#9a9a9a" stroke-width="0.8"/><path d="M6 6C6.5 3 9 2 11.5 2.2" stroke="#6a6a6a" stroke-width="2.4" fill="none"/><path d="M10.5 -0.5L16 2.5L10.5 5.5Z" fill="#6a6a6a"/></g><g transform="translate(161 124)"><g transform="translate(1.5 0)"><path d="M0.5 5.5L2.5 3.5H6V5.5H11.5V15.5H0.5Z" fill="#9a9a9a" stroke="#7a7a7a"/><path d="M2 8.5h8 M2 10.5h8 M2 12.5h8" stroke="#b8b8b8" stroke-width="1.1"/><path d="M4.5 7V14 M7.5 7V14" stroke="#9a9a9a" stroke-width="0.8"/></g><path d="M3.5 0.5C7 0.5 8.5 2 8.2 5" stroke="#6a6a6a" stroke-width="2.4" fill="none"/><path d="M5 4.5H11.5L8.2 9Z" fill="#6a6a6a"/></g><g transform="translate(187 124)"><rect x="0.8" y="0.8" width="14" height="14" fill="url(#gb)" stroke="#222" stroke-width="1.2" stroke-dasharray="3 1.3"/><rect x="4" y="3.5" width="8.5" height="7" fill="#d8eefa" stroke="#1f9ae0" stroke-width="1.4"/><circle cx="4.5" cy="10" r="2.7" fill="#e8f5fc" stroke="#1f9ae0" stroke-width="1.4"/><use href="#cur" x="9.5" y="5"/></g><g transform="translate(207 124)"><rect x="0.8" y="0.8" width="14" height="14" fill="url(#gb)" stroke="#222" stroke-width="1.2" stroke-dasharray="3 1.3"/><path d="M2.5 2.5L7 7 M7 2.5L2.5 7" stroke="#1f9ae0" stroke-width="1.1"/><use href="#cur" x="9.5" y="5"/></g><path d="M65.5 126V138" stroke="#f4f4f4" stroke-width="1"/><path d="M64.6 126V138" stroke="#5a6270" stroke-width="0.8"/><path d="M133.0 126V138" stroke="#f4f4f4" stroke-width="1"/><path d="M132.1 126V138" stroke="#5a6270" stroke-width="0.8"/><path d="M181.0 126V138" stroke="#f4f4f4" stroke-width="1"/><path d="M180.1 126V138" stroke="#5a6270" stroke-width="0.8"/><use href="#bulb" x="126" y="211.5" transform="translate(126 211.5) scale(0.98) translate(-126 -211.5)"/><use href="#sun" x="141.3" y="211.8"/><use href="#lock" x="158.3" y="211.2"/><clipPath id="lc"><rect x="0" y="98" width="17" height="395"/></clipPath><g clip-path="url(#lc)"><path d="M0 103.5h1.5 M3.5 103.5h2 M7.5 103.5h2 M11.5 103.5h2" stroke="#222" stroke-width="2"/><path d="M0 104.8h1.5 M3.5 104.8h2 M7.5 104.8h2 M11.5 104.8h2" stroke="#eee" stroke-width="0.8"/><path d="M-1 125.5L12.5 111.5" stroke="#333" stroke-width="1.1"/><use href="#hb" x="12.5" y="111.5"/><use href="#hb" x="-0.5" y="124.5"/><path d="M-1 146L13.5 132 M13.5 132h-3.2 M13.5 132v3.2" stroke="#555" stroke-width="1.1" fill="none"/><rect x="3.2" y="139.2" width="2.8" height="2.8" fill="#fff" stroke="#333" stroke-width="0.9"/><use href="#tri" x="12" y="145"/><path d="M-1 153.5H9C12.5 153.5 13 157 12 159.5C11 161.5 8 161.5 5.5 161.5V167" stroke="#444" stroke-width="1.1" fill="none"/><use href="#hb" x="5.5" y="153.5"/><use href="#hb" x="12.5" y="157.5"/><use href="#hb" x="5.5" y="161.5"/><use href="#hb" x="5.5" y="166.5"/><use href="#hb" x="-0.8" y="153.5"/><use href="#hb" x="-0.8" y="166.5"/><path d="M6 173L13.5 179L10.5 187.5H1.5L-1.5 179Z" fill="url(#gb)" stroke="#444" stroke-width="1.1"/><rect x="-3" y="194" width="15.5" height="11.5" fill="url(#gb2)" stroke="#333" stroke-width="1.1"/><rect x="11" y="204" width="2.8" height="2.8" fill="#fff" stroke="#333" stroke-width="0.9"/><rect x="-1.5" y="192.5" width="2.8" height="2.8" fill="#fff" stroke="#333" stroke-width="0.9"/><use href="#tri" x="12" y="208"/><path d="M-1 231C0 223.5 5.5 217.5 12.5 216.3" stroke="#444" stroke-width="1.1" fill="none"/><use href="#hb" x="12.5" y="216.3"/><use href="#hb" x="3" y="220.8"/><use href="#hb" x="-0.8" y="229.5"/><use href="#tri" x="12" y="229"/><circle cx="5" cy="244.5" r="7.5" fill="url(#gb)" stroke="#444" stroke-width="1.1"/><path d="M5.5 244.5H12.5" stroke="#1f9ae0" stroke-width="1.3"/><rect x="4.2" y="243.1" width="2.8" height="2.8" fill="#fff" stroke="#222" stroke-width="0.9"/><rect x="11.2" y="243.1" width="2.8" height="2.8" fill="#fff" stroke="#222" stroke-width="0.9"/><use href="#tri" x="12" y="250"/><path d="M0 259.5h16" stroke="#f2f3f5" stroke-width="1.2"/><path d="M0 258.5h16" stroke="#8a909a" stroke-width="0.8"/><path d="M1 268C2 264 6 264 7 266.5C8 264 13 264.5 13.5 268C14.5 271 12.5 273 13 276C13.5 280 9 281 7 279C4 281.5 1 280 1.5 277C-1.5 276 -1.5 270 1 268Z" fill="url(#gg)" stroke="#555" stroke-width="1.1"/><path d="M-1 299C1 293 4 293 6 297C8 301 10 301 11 296C11.8 292 12 289 12.5 287" stroke="#444" stroke-width="1.1" fill="none"/><use href="#hb" x="12.5" y="287.5"/><use href="#hb" x="8.5" y="299.5"/><use href="#hb" x="0.5" y="300.5"/><ellipse cx="5.5" cy="314.5" rx="8" ry="6" fill="url(#gb)" stroke="#444" stroke-width="1.1"/><path d="M5.5 314.5H12.5 M5.5 308.5V314.5" stroke="#1f9ae0" stroke-width="1.2"/><path d="M3.5 314.5h4" stroke="#222" stroke-width="1"/><rect x="4.2" y="307" width="2.8" height="2.8" fill="#fff" stroke="#222" stroke-width="0.9"/><rect x="11.2" y="313.1" width="2.8" height="2.8" fill="#fff" stroke="#222" stroke-width="0.9"/><use href="#tri" x="12" y="320"/><path d="M0 330.5h16" stroke="#f2f3f5" stroke-width="1.2"/><path d="M0 329.5h16" stroke="#8a909a" stroke-width="0.8"/><rect x="0" y="338.5" width="10" height="10.5" fill="#29a8e8"/><path d="M0 342l3.5-3.5 M0 345.5l7-7 M0.5 349l9.5-9.5 M4 349l6-6 M7.5 349l2.5-2.5" stroke="#e8f6ff" stroke-width="1"/><path d="M-1 338.5H13 M10.5 336V351.5 M-1 349.5H13" stroke="#333" stroke-width="0.9"/><use href="#tri" x="12" y="351"/><path d="M0 359.0h16" stroke="#f2f3f5" stroke-width="1.2"/><path d="M0 358.0h16" stroke="#8a909a" stroke-width="0.8"/><path d="M2.5 365.5H9L12.5 369V380.5H2.5Z" fill="#f4f4f4" stroke="#555" stroke-width="1.1"/><circle cx="2" cy="375" r="3.3" fill="#d6ecf9" stroke="#445" stroke-width="1"/><path d="M3 380L7 373L10.5 380Z" fill="#d6ecf9" stroke="#445" stroke-width="1"/><path d="M-1 380.5H12.5" stroke="#445"/><use href="#tri" x="12" y="380"/><circle cx="2" cy="394.5" r="3.5" fill="#d6ecf9" stroke="#445" stroke-width="1"/><path d="M4.5 391.5H12.5L11 400.5" fill="none" stroke="#445" stroke-width="1.1"/><path d="M3 400.5L7.5 393.5L11.5 400.5Z" fill="#d6ecf9" stroke="#445" stroke-width="1"/><path d="M-1 400.5H12" stroke="#445"/><use href="#tri" x="12" y="401"/><path d="M0 409.2h16" stroke="#f2f3f5" stroke-width="1.2"/><path d="M0 408.2h16" stroke="#8a909a" stroke-width="0.8"/><rect x="4.2" y="420.7" width="2.8" height="2.8" fill="#fff" stroke="#333" stroke-width="0.9"/><use href="#tri" x="12" y="429"/><path d="M0 438.3h16" stroke="#f2f3f5" stroke-width="1.2"/><path d="M0 437.3h16" stroke="#8a909a" stroke-width="0.8"/><rect x="1.5" y="444.5" width="11.5" height="10.5" fill="#dfeefa" stroke="#2a5ea8" stroke-width="1"/><path d="M2 446h10.5" stroke="#2a5ea8" stroke-width="2" stroke-dasharray="2 1"/><rect x="-3" y="447.5" width="14" height="10" fill="#eef5fc" stroke="#2a5ea8" stroke-width="1"/><path d="M-2.5 449h13" stroke="#2a5ea8" stroke-width="2"/><path d="M2 452.3h3 M6.5 452.3h3 M2 455h3 M6.5 455h3" stroke="#223" stroke-width="1.6"/><text transform="translate(3.1 481) scale(0.7 1)" font-family="Liberation Serif" font-size="24" fill="#444">T</text><use href="#tri" x="12" y="478.7"/></g><path d="M1574.5 103.5h2 M1578.5 103.5h2 M1582.5 103.5h2 M1586.5 103.5h2" stroke="#222" stroke-width="2"/><path d="M1574.5 104.9h2 M1578.5 104.9h2 M1582.5 104.9h2 M1586.5 104.9h2" stroke="#f4f4f4" stroke-width="0.9"/><g transform="translate(1574 111.5)"><path d="M0 15H16" stroke="#111" stroke-width="1.2"/><path d="M9.4 9.6L15.8 1.8" stroke="#3b96e0" stroke-width="5"/><path d="M7.8 11.6L9.6 9.4" stroke="#e4e4e4" stroke-width="4.6"/><path d="M6.6 13.2L7.8 11.7" stroke="#e8683a" stroke-width="4.2" stroke-linecap="round"/></g><g transform="translate(1574 132)"><path d="M0.5 6L6.5 0.5V9.5L0.5 15Z" fill="#29a8e8" stroke="#1a88c8" stroke-width="0.6"/><path d="M9.5 6L15.5 0.5V9.5L9.5 15Z" fill="#8a8a8a" stroke="#444" stroke-width="0.9"/><path d="M3 7.5H12.5 M10 5L12.5 7.5L10 10" stroke="#222" stroke-width="1.2" fill="none"/><path d="M3 7.5H7" stroke="#fff" stroke-width="1.2"/></g><g transform="translate(1574 153)"><path d="M0.3 5L3.5 0.3H12L0.3 12Z" fill="#2aa6e6"/><path d="M16 5V10.5L12.5 15H4.5Z" fill="#8a8a8a" stroke="#5a5a5a" stroke-width="0.5"/><path d="M0.2 14.6L15.2 0" stroke="#444" stroke-width="1.1"/><path d="M0.9 15.2L15.8 0.7" stroke="#f4f4f4" stroke-width="0.9"/><path d="M1.7 15.8L16.3 1.5" stroke="#444" stroke-width="1.1"/></g><g transform="translate(1574 175)"><path d="M0.5 3.5H4.8L6.2 1.5H9.8L11.2 3.5H15.5V10.5H11.2L9.8 13.5H6.2L4.8 10.5H0.5" fill="none" stroke="#3a3a3a" stroke-width="1.1"/><path d="M0.5 5.5H6.5V3.2H9.5V5.5H13V8.5H9.5V11.8H6.5V8.5H0.5" fill="none" stroke="#1f9ae0" stroke-width="1.3"/></g><g transform="translate(1574 195)"><rect x="0.8" y="0.8" width="3" height="3" fill="#fff" stroke="#3a3a3a" stroke-width="1.1"/><rect x="6.8" y="0.8" width="3" height="3" fill="#fff" stroke="#3a3a3a" stroke-width="1.1"/><rect x="12.8" y="0.8" width="3" height="3" fill="#fff" stroke="#3a3a3a" stroke-width="1.1"/><rect x="0.8" y="6.8" width="3" height="3" fill="#cfcfcf" stroke="#3a3a3a" stroke-width="1.1"/><rect x="6.8" y="6.8" width="3" height="3" fill="#cfcfcf" stroke="#3a3a3a" stroke-width="1.1"/><rect x="12.8" y="6.8" width="3" height="3" fill="#cfcfcf" stroke="#3a3a3a" stroke-width="1.1"/><rect x="0.8" y="12.8" width="3" height="3" fill="#bfe6fb" stroke="#1f9ae0" stroke-width="1.1"/><rect x="6.8" y="12.8" width="3" height="3" fill="#5a5a5a" stroke="#3a3a3a" stroke-width="1.1"/><rect x="12.8" y="12.8" width="3" height="3" fill="#5a5a5a" stroke="#3a3a3a" stroke-width="1.1"/></g><path d="M1571 218.5h22" stroke="#f2f3f5" stroke-width="1.2"/><path d="M1571 217.5h22" stroke="#8a909a" stroke-width="0.8"/><g transform="translate(1574 224.5)"><path d="M8 1V15 M1 8H15" stroke="#1a6a8a" stroke-width="1.4" stroke-dasharray="2 1.3"/><path d="M8 0L11 3.5H5Z M8 16L11 12.5H5Z M0 8L3.5 5V11Z M16 8L12.5 5V11Z" fill="#1a6a8a"/><circle cx="8" cy="8" r="1.5" fill="#29a8e8"/></g><g transform="translate(1574 245.5)"><path d="M11.5 3A6.3 6.3 0 1 1 4.5 3" fill="none" stroke="#1a6f92" stroke-width="1.9"/><path d="M1.5 0.5L7 1.2L3.2 5.6Z" fill="#1a6f92"/></g><path d="M1571 268.0h22" stroke="#f2f3f5" stroke-width="1.2"/><path d="M1571 267.0h22" stroke="#8a909a" stroke-width="0.8"/><g transform="translate(1574 274)"><rect x="0.8" y="0.8" width="14.4" height="14.4" fill="#d8d8d8" stroke="#444" stroke-width="1.3"/><rect x="1" y="6" width="9" height="9" fill="url(#gb2)" stroke="#1f9ae0" stroke-width="1.3"/></g><g transform="translate(1574 295)"><path d="M6 0.5H15.5L11.5 15.5H6Z" fill="url(#gg)" stroke="#444" stroke-width="1"/><rect x="0.6" y="0.6" width="6" height="14.8" fill="url(#gb2)" stroke="#1f9ae0" stroke-width="1.2"/><path d="M2 5.5H11.5 M9 3L11.5 5.5L9 8" stroke="#222" stroke-width="1.2" fill="none"/></g><path d="M1571 318.0h22" stroke="#f2f3f5" stroke-width="1.2"/><path d="M1571 317.0h22" stroke="#8a909a" stroke-width="0.8"/><g transform="translate(1574 325)"><path d="M0.5 6.5H5" stroke="#111" stroke-width="1.3"/><path d="M7 6.5H16" stroke="#1f9ae0" stroke-width="1.2" stroke-dasharray="2 1.2"/><path d="M3 12.5L9.5 0.5" stroke="#e01818" stroke-width="1.4"/></g><g transform="translate(1574 346)"><path d="M0.5 7H5" stroke="#1f9ae0" stroke-width="1.3"/><path d="M5.5 7H12" stroke="#222" stroke-width="1.1" stroke-dasharray="1.6 1.2"/><path d="M9.5 13L15.5 0.5" stroke="#e01818" stroke-width="1.4"/></g><g transform="translate(1574 364)"><path d="M4 1.5H0.8V12.5C3 16.5 13 16.5 15.2 12.5V1.5H12" fill="none" stroke="#444" stroke-width="1.1"/><use href="#hb" x="4.5" y="1.8"/><use href="#hb" x="11.5" y="1.8"/></g><g transform="translate(1574 388)"><path d="M0.8 1.5V10C3 14.5 13 14.5 15.2 10V1.5Z" fill="none" stroke="#444" stroke-width="1.1"/><use href="#hb" x="7.5" y="1.6"/></g><g transform="translate(1574 408)"><path d="M2 0V16 M14.5 0V16" stroke="#333" stroke-width="1.1"/><path d="M2 8.5H12 M9 5.5L12 8.5L9 11.5" stroke="#1f9ae0" stroke-width="1.6" fill="none"/><use href="#hb" x="2" y="4.8"/><use href="#hb" x="2" y="12"/><circle cx="14.5" cy="8.5" r="1.3" fill="#fff" stroke="#222" stroke-width="0.9"/></g><path d="M1571 431.5h22" stroke="#f2f3f5" stroke-width="1.2"/><path d="M1571 430.5h22" stroke="#8a909a" stroke-width="0.8"/><g transform="translate(1574 434.5)"><path d="M0.5 2H7.5L13.5 8.5V16" stroke="#1d4f91" stroke-width="1.3" fill="none"/><path d="M7.5 2L13.5 8.5" stroke="#e02020" stroke-width="1.5"/><path d="M9 2H14V7" stroke="#222" stroke-width="1" stroke-dasharray="1.2 1.2" fill="none"/></g><g transform="translate(1574 459)"><path d="M0.5 2H6 M13.5 9.5V16" stroke="#1d4f91" stroke-width="1.3"/><path d="M6 2C10.5 2 13.5 5 13.5 9.5" stroke="#e02020" stroke-width="1.5" fill="none"/><path d="M13.5 2.5v1.5" stroke="#222"/><path d="M4 13L9 8" stroke="#1d4f91" stroke-width="1.4"/><path d="M10.3 6.7L9.5 10.5L6.5 7.5Z" fill="#1d4f91"/></g><path d="M1571 481.5h22" stroke="#f2f3f5" stroke-width="1.2"/><path d="M1571 480.5h22" stroke="#8a909a" stroke-width="0.8"/><g transform="translate(1574 487)"><circle cx="6.5" cy="9.5" r="6.3" fill="url(#gbomb)"/><path d="M9 4.5L11 2.5" stroke="#444" stroke-width="2.2"/><path d="M11 2.5C12 1 13 1.5 13.5 2.5" stroke="#a08060" stroke-width="1" fill="none"/><circle cx="14" cy="3.5" r="2.2" fill="#ffc8c0"/><circle cx="14" cy="3.5" r="1.1" fill="#f03020"/></g><g transform="translate(1574 507.5)"><rect x="1" y="1" width="10" height="11.5" fill="#dbe7f5" stroke="#2a5ea8" stroke-width="1.2"/><path d="M1.5 2.5h9" stroke="#2a5ea8" stroke-width="2"/><rect x="11.5" y="2" width="4" height="4" fill="#eef" stroke="#99a" stroke-width="0.6" stroke-dasharray="1 1"/><path d="M9 3.5L10.5 7.5L14.5 6.5L11.5 9.5L14 13L10 11.5L8 15.5L7 11.5L2.5 12L6 9L3.5 5.5L7.5 7Z" fill="#f8d020" stroke="#e04818" stroke-width="0.8"/><circle cx="8.7" cy="9.5" r="1.6" fill="#e01818"/><circle cx="5" cy="13" r="1.4" fill="#c01010"/></g><path d="M1571 527.8l1.5 0 M1591.5 527.8h1.5" stroke="#444" stroke-width="1.5"/><path d="M1574.5 533h2 M1578.5 533h2 M1582.5 533h2 M1586.5 533h2" stroke="#222" stroke-width="2"/><path d="M1574.5 534.4h2 M1578.5 534.4h2 M1582.5 534.4h2 M1586.5 534.4h2" stroke="#f4f4f4" stroke-width="0.9"/><g transform="translate(1574 540)"><rect x="0.5" y="0.5" width="9" height="6" fill="url(#gg)" stroke="#444" stroke-width="1"/><circle cx="8.5" cy="7.5" r="5" fill="url(#ggreen)" stroke="#0a7a1a" stroke-width="0.7"/><rect x="6.5" y="9.5" width="9" height="6" fill="url(#gg)" stroke="#444" stroke-width="1"/></g><g transform="translate(1574 561)"><circle cx="8" cy="8.5" r="5" fill="url(#ggreen)" stroke="#0a7a1a" stroke-width="0.7"/><rect x="0.5" y="0.5" width="9" height="6" fill="url(#gg)" stroke="#444" stroke-width="1"/><rect x="6.5" y="9.5" width="9" height="6" fill="url(#gg)" stroke="#444" stroke-width="1"/></g><g transform="translate(1574 582.5)"><rect x="6.5" y="6.5" width="9" height="8.5" fill="url(#gg)" stroke="#444" stroke-width="1"/><circle cx="6.5" cy="6.5" r="6" fill="url(#gblue)" stroke="#445" stroke-width="1"/></g><g transform="translate(1574 603)"><circle cx="6.5" cy="6.5" r="6" fill="url(#gblue)" stroke="#445" stroke-width="1"/><rect x="6.5" y="6.5" width="9" height="9" fill="url(#gg)" stroke="#444" stroke-width="1"/></g></svg></body></html>
